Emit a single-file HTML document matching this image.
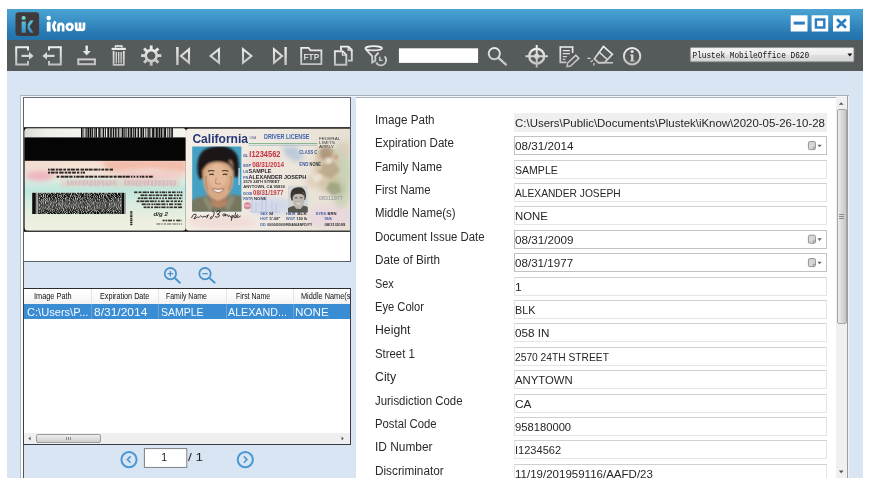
<!DOCTYPE html>
<html>
<head>
<meta charset="utf-8">
<title>iKnow</title>
<style>
html,body{margin:0;padding:0;background:#fff;}
body{width:869px;height:490px;position:relative;overflow:hidden;font-family:"Liberation Sans",sans-serif;}
.abs{position:absolute;}
.t{position:absolute;white-space:nowrap;}
#win{position:absolute;left:7px;top:9px;width:856px;height:469px;background:#dae5f3;overflow:hidden;filter:blur(0.4px);}
#title{position:absolute;left:0;top:0;width:856px;height:31px;background:linear-gradient(#4aa3d1 0%,#3c92c7 35%,#2b7db6 70%,#2272ab 100%);}
#tool{position:absolute;left:0;top:31px;width:856px;height:30.5px;background:#555a5b;}
.wb{position:absolute;top:6px;width:17px;height:16px;background:#fff;}
#imgpanel{position:absolute;left:16px;top:88px;width:326px;height:163px;background:#fff;border:1px solid #5d626b;border-top-color:#666b74;}
#list{position:absolute;left:16px;top:279px;width:326px;height:155px;background:#fff;border:1px solid #3a3e44;border-top:1.5px solid #2a2d32;overflow:hidden;}
#form{position:absolute;left:348.5px;top:88px;width:491px;height:381px;background:#fff;overflow:hidden;border-top:1px solid #aab0ba;}
.tb{position:absolute;left:506.5px;width:311px;height:17.4px;border:1px solid #e5e5e5;border-top-color:#d0d0d0;background:#fff;}
.tb.ro{background:#efefef;border-color:#efefef;}
.tb.dt{border-color:#c2c2c2;}
svg{position:absolute;overflow:visible;}
</style>
</head>
<body>
<div id="win">
<div id="title"></div>
<div id="tool"></div>

<div class="abs" style="left:13px;top:86px;width:829px;height:1px;background:#a9b0ba;"></div>
<div class="abs" style="left:14px;top:87px;width:826px;height:1px;background:#f3f6fa;"></div>
<div class="abs" style="left:13px;top:86px;width:1px;height:383px;background:#b3bac4;"></div>
<div class="abs" style="left:14px;top:87px;width:2px;height:382px;background:#fbfcfe;"></div>
<div class="abs" style="left:16px;top:88px;width:1px;height:381px;background:#4f545c;"></div>
<div class="abs" style="left:840px;top:87px;width:2px;height:382px;background:#eef2f8;"></div>
<div id="imgpanel"></div>
<div id="list"></div>
<div id="form"></div>
<div class="tb ro" style="top:104px;"></div>
<div class="t" id="l0" style="left:367.70px;top:104.84px;font-size:12px;line-height:12px;color:#2a2a2a;font-weight:normal;font-family:'Liberation Sans',sans-serif;transform-origin:0 0;transform:scaleX(0.9711);">Image Path</div>
<div class="t" id="v0" style="left:508.20px;top:108.73px;font-size:11.3px;line-height:11.3px;color:#262626;font-weight:normal;font-family:'Liberation Sans',sans-serif;transform-origin:0 0;transform:scaleX(1.0137);">C:\Users\Public\Documents\Plustek\iKnow\2020-05-26-10-28</div>
<div class="tb dt" style="top:127px;"></div>
<div class="t" id="l1" style="left:367.70px;top:128.24px;font-size:12px;line-height:12px;color:#2a2a2a;font-weight:normal;font-family:'Liberation Sans',sans-serif;transform-origin:0 0;transform:scaleX(0.9629);">Expiration Date</div>
<div class="t" id="v1" style="left:508.20px;top:132.14px;font-size:11.3px;line-height:11.3px;color:#262626;font-weight:normal;font-family:'Liberation Sans',sans-serif;transform-origin:0 0;transform:scaleX(1.0345);">08/31/2014</div>
<div class="tb " style="top:151px;"></div>
<div class="t" id="l2" style="left:367.70px;top:151.64px;font-size:12px;line-height:12px;color:#2a2a2a;font-weight:normal;font-family:'Liberation Sans',sans-serif;transform-origin:0 0;transform:scaleX(0.9492);">Family Name</div>
<div class="t" id="v2" style="left:508.20px;top:155.55px;font-size:11.3px;line-height:11.3px;color:#262626;font-weight:normal;font-family:'Liberation Sans',sans-serif;transform-origin:0 0;transform:scaleX(0.9336);">SAMPLE</div>
<div class="tb " style="top:174px;"></div>
<div class="t" id="l3" style="left:367.70px;top:175.04px;font-size:12px;line-height:12px;color:#2a2a2a;font-weight:normal;font-family:'Liberation Sans',sans-serif;transform-origin:0 0;transform:scaleX(0.9459);">First Name</div>
<div class="t" id="v3" style="left:508.20px;top:178.96px;font-size:11.3px;line-height:11.3px;color:#262626;font-weight:normal;font-family:'Liberation Sans',sans-serif;transform-origin:0 0;transform:scaleX(0.9051);">ALEXANDER JOSEPH</div>
<div class="tb " style="top:197px;"></div>
<div class="t" id="l4" style="left:367.70px;top:198.44px;font-size:12px;line-height:12px;color:#2a2a2a;font-weight:normal;font-family:'Liberation Sans',sans-serif;transform-origin:0 0;transform:scaleX(0.9517);">Middle Name(s)</div>
<div class="t" id="v4" style="left:508.20px;top:202.37px;font-size:11.3px;line-height:11.3px;color:#262626;font-weight:normal;font-family:'Liberation Sans',sans-serif;transform-origin:0 0;transform:scaleX(1.0049);">NONE</div>
<div class="tb dt" style="top:221px;"></div>
<div class="t" id="l5" style="left:367.70px;top:221.84px;font-size:12px;line-height:12px;color:#2a2a2a;font-weight:normal;font-family:'Liberation Sans',sans-serif;transform-origin:0 0;transform:scaleX(0.9498);">Document Issue Date</div>
<div class="t" id="v5" style="left:508.20px;top:225.78px;font-size:11.3px;line-height:11.3px;color:#262626;font-weight:normal;font-family:'Liberation Sans',sans-serif;transform-origin:0 0;transform:scaleX(1.0345);">08/31/2009</div>
<div class="tb dt" style="top:244px;"></div>
<div class="t" id="l6" style="left:367.70px;top:245.24px;font-size:12px;line-height:12px;color:#2a2a2a;font-weight:normal;font-family:'Liberation Sans',sans-serif;transform-origin:0 0;transform:scaleX(0.9760);">Date of Birth</div>
<div class="t" id="v6" style="left:508.20px;top:249.19px;font-size:11.3px;line-height:11.3px;color:#262626;font-weight:normal;font-family:'Liberation Sans',sans-serif;transform-origin:0 0;transform:scaleX(1.0275);">08/31/1977</div>
<div class="tb " style="top:268px;"></div>
<div class="t" id="l7" style="left:367.70px;top:268.64px;font-size:12px;line-height:12px;color:#2a2a2a;font-weight:normal;font-family:'Liberation Sans',sans-serif;transform-origin:0 0;transform:scaleX(0.9039);">Sex</div>
<div class="t" id="v7" style="left:508.20px;top:272.60px;font-size:11.3px;line-height:11.3px;color:#262626;font-weight:normal;font-family:'Liberation Sans',sans-serif;transform-origin:0 0;transform:scaleX(1.0640);">1</div>
<div class="tb " style="top:291px;"></div>
<div class="t" id="l8" style="left:367.70px;top:292.04px;font-size:12px;line-height:12px;color:#2a2a2a;font-weight:normal;font-family:'Liberation Sans',sans-serif;transform-origin:0 0;transform:scaleX(0.9300);">Eye Color</div>
<div class="t" id="v8" style="left:508.20px;top:296.01px;font-size:11.3px;line-height:11.3px;color:#262626;font-weight:normal;font-family:'Liberation Sans',sans-serif;transform-origin:0 0;transform:scaleX(0.9551);">BLK</div>
<div class="tb " style="top:314px;"></div>
<div class="t" id="l9" style="left:367.70px;top:315.44px;font-size:12px;line-height:12px;color:#2a2a2a;font-weight:normal;font-family:'Liberation Sans',sans-serif;transform-origin:0 0;transform:scaleX(1.0234);">Height</div>
<div class="t" id="v9" style="left:508.20px;top:319.42px;font-size:11.3px;line-height:11.3px;color:#262626;font-weight:normal;font-family:'Liberation Sans',sans-serif;transform-origin:0 0;transform:scaleX(1.0361);">058 IN</div>
<div class="tb " style="top:338px;"></div>
<div class="t" id="l10" style="left:367.70px;top:338.84px;font-size:12px;line-height:12px;color:#2a2a2a;font-weight:normal;font-family:'Liberation Sans',sans-serif;transform-origin:0 0;transform:scaleX(0.9469);">Street 1</div>
<div class="t" id="v10" style="left:508.20px;top:342.83px;font-size:11.3px;line-height:11.3px;color:#262626;font-weight:normal;font-family:'Liberation Sans',sans-serif;transform-origin:0 0;transform:scaleX(0.9063);">2570 24TH STREET</div>
<div class="tb " style="top:361px;"></div>
<div class="t" id="l11" style="left:367.70px;top:362.24px;font-size:12px;line-height:12px;color:#2a2a2a;font-weight:normal;font-family:'Liberation Sans',sans-serif;transform-origin:0 0;transform:scaleX(1.0255);">City</div>
<div class="t" id="v11" style="left:508.20px;top:366.24px;font-size:11.3px;line-height:11.3px;color:#262626;font-weight:normal;font-family:'Liberation Sans',sans-serif;transform-origin:0 0;transform:scaleX(1.0027);">ANYTOWN</div>
<div class="tb " style="top:385px;"></div>
<div class="t" id="l12" style="left:367.70px;top:385.64px;font-size:12px;line-height:12px;color:#2a2a2a;font-weight:normal;font-family:'Liberation Sans',sans-serif;transform-origin:0 0;transform:scaleX(0.9506);">Jurisdiction Code</div>
<div class="t" id="v12" style="left:508.20px;top:389.65px;font-size:11.3px;line-height:11.3px;color:#262626;font-weight:normal;font-family:'Liberation Sans',sans-serif;transform-origin:0 0;transform:scaleX(1.0507);">CA</div>
<div class="tb " style="top:408px;"></div>
<div class="t" id="l13" style="left:367.70px;top:409.04px;font-size:12px;line-height:12px;color:#2a2a2a;font-weight:normal;font-family:'Liberation Sans',sans-serif;transform-origin:0 0;transform:scaleX(0.9423);">Postal Code</div>
<div class="t" id="v13" style="left:508.20px;top:413.06px;font-size:11.3px;line-height:11.3px;color:#262626;font-weight:normal;font-family:'Liberation Sans',sans-serif;transform-origin:0 0;transform:scaleX(0.9921);">958180000</div>
<div class="tb " style="top:431px;"></div>
<div class="t" id="l14" style="left:367.70px;top:432.44px;font-size:12px;line-height:12px;color:#2a2a2a;font-weight:normal;font-family:'Liberation Sans',sans-serif;transform-origin:0 0;transform:scaleX(0.9911);">ID Number</div>
<div class="t" id="v14" style="left:508.20px;top:436.47px;font-size:11.3px;line-height:11.3px;color:#262626;font-weight:normal;font-family:'Liberation Sans',sans-serif;transform-origin:0 0;transform:scaleX(0.9782);">I1234562</div>
<div class="tb " style="top:455px;"></div>
<div class="t" id="l15" style="left:367.70px;top:455.84px;font-size:12px;line-height:12px;color:#2a2a2a;font-weight:normal;font-family:'Liberation Sans',sans-serif;transform-origin:0 0;transform:scaleX(0.9812);">Discriminator</div>
<div class="t" id="v15" style="left:508.20px;top:459.88px;font-size:11.3px;line-height:11.3px;color:#262626;font-weight:normal;font-family:'Liberation Sans',sans-serif;transform-origin:0 0;transform:scaleX(1.0196);">11/19/201959116/AAFD/23</div>
<svg style="left:-7px;top:-9px" width="869" height="490" viewBox="0 0 869 490">
<defs><linearGradient id="ig" x1="0" y1="45" x2="0" y2="66" gradientUnits="userSpaceOnUse"><stop offset="0" stop-color="#f4f4f4"/><stop offset="1" stop-color="#bdbdbd"/></linearGradient><linearGradient id="lg" x1="0" y1="16" x2="0" y2="34" gradientUnits="userSpaceOnUse"><stop offset="0" stop-color="#7fe0c0"/><stop offset="0.5" stop-color="#4ab0d8"/><stop offset="1" stop-color="#2f86d0"/></linearGradient></defs>
<rect x="15.5" y="12.2" width="23.6" height="23.8" rx="3.2" fill="#3f3b3c"/>
<circle cx="23.6" cy="18" r="2.1" fill="url(#lg)"/>
<path d="M21.6 21.5 h4.2 v11.3 h-4.2z" fill="url(#lg)"/>
<path d="M33.6 20.6 L29.6 26.6 L33.4 32.8 L30.2 32.8 L27.6 28.6 L27.6 24.4 L30.2 20.6z" fill="url(#lg)"/>
<g fill="#fff"><circle cx="48.7" cy="18" r="2.35"/><path d="M46.8 23.2 q0 -1.8 1.9 -1.8 q1.9 0 1.9 1.8 V31.4 H46.8z"/><g fill="none" stroke="#fff" stroke-width="2.7"><path d="M55.6 21.6 Q51.2 26.4 55.6 31.3" stroke-width="2.9"/><path d="M58.55 31.4 V26.2 a2.3 2.3 0 0 1 4.6 0 V31.4"/><ellipse cx="69.65" cy="26.9" rx="2.85" ry="3.1"/><path d="M76.15 22.4 V28 a1.95 1.95 0 0 0 3.9 0 V22.4 M80.05 28 a1.95 1.95 0 0 0 3.9 0 V22.4"/></g></g>
<rect x="790.7" y="15.3" width="16.8" height="16.2" fill="#fff"/><rect x="793.6" y="21.6" width="11.2" height="3" fill="#2b7dc0"/>
<rect x="811.6" y="15.3" width="16.6" height="16.2" fill="#fff"/><rect x="815.9" y="19.5" width="8.4" height="8" fill="none" stroke="#2b7dc0" stroke-width="2.4"/>
<rect x="833" y="15.3" width="16.8" height="16.2" fill="#fff"/><path d="M837 19.2 L846 27.8 M846 19.2 L837 27.8" stroke="#2b7dc0" stroke-width="2.6" fill="none"/>
<g fill="none" stroke="url(#ig)" stroke-width="2" stroke-linejoin="miter">
<path d="M28 50.5 V47.2 H16.2 V64.5 H28 V61"/>
<path d="M21.5 55.9 H31.5" stroke-width="2.2"/><path d="M29 52 L33.6 55.9 L29 59.8z" fill="url(#ig)" stroke="none"/>
<path d="M49 50.5 V47.2 H60.8 V64.5 H49 V61"/>
<path d="M44.5 55.9 H54.5" stroke-width="2.2"/><path d="M47 52 L42.4 55.9 L47 59.8z" fill="url(#ig)" stroke="none"/>
<rect x="78.3" y="59.4" width="16.6" height="4.8"/>
<path d="M86.7 45.6 V52" stroke-width="2.4"/><path d="M82.6 51 H90.8 L86.7 55.6z" fill="url(#ig)" stroke="none"/>
<path d="M111.6 48.9 H125.8" stroke-width="2.2"/><path d="M115.6 47.6 V46 H121.8 V47.6" stroke-width="1.6"/>
<path d="M113.6 51 V64.8 H123.8 V51" stroke-width="1.8"/><path d="M116.3 52 V63.4 M118.7 52 V63.4 M121.1 52 V63.4" stroke-width="1.3"/>
</g>
<g fill="none"><path d="M157.20 55.60 L161.30 55.60" stroke="url(#ig)" stroke-width="2.8"/><path d="M155.44 59.84 L158.34 62.74" stroke="url(#ig)" stroke-width="2.8"/><path d="M151.20 61.60 L151.20 65.70" stroke="url(#ig)" stroke-width="2.8"/><path d="M146.96 59.84 L144.06 62.74" stroke="url(#ig)" stroke-width="2.8"/><path d="M145.20 55.60 L141.10 55.60" stroke="url(#ig)" stroke-width="2.8"/><path d="M146.96 51.36 L144.06 48.46" stroke="url(#ig)" stroke-width="2.8"/><path d="M151.20 49.60 L151.20 45.50" stroke="url(#ig)" stroke-width="2.8"/><path d="M155.44 51.36 L158.34 48.46" stroke="url(#ig)" stroke-width="2.8"/><circle cx="151.2" cy="55.6" r="5.5" stroke="url(#ig)" stroke-width="2.6"/></g>
<g fill="none" stroke="url(#ig)" stroke-width="2.1" stroke-linejoin="miter">
<path d="M177.4 47 V65" stroke-width="2.4"/><path d="M189 49.2 V62.8 L181 56z"/>
<path d="M219 49.2 V62.8 L210.6 56z"/>
<path d="M243 49.2 V62.8 L251.4 56z"/>
<path d="M285.6 47 V65" stroke-width="2.4"/><path d="M274 49.2 V62.8 L282 56z"/>
<path d="M301.2 64.2 V47.8 H308.6 L310.4 50.3 H321.4 V64.2z" stroke-width="1.8"/>
</g>
<text x="303.5" y="59.5" font-family="Liberation Sans" font-weight="bold" font-size="8.2" fill="url(#ig)" textLength="15.7" lengthAdjust="spacingAndGlyphs">FTP</text>
<g fill="none" stroke="url(#ig)" stroke-width="1.9" stroke-linejoin="miter">
<path d="M341 50 V46.6 H348.4 L351.8 50 V60.6 H348"/><path d="M348.2 46.8 V50.2 H351.6" stroke-width="1.2"/>
<path d="M334.9 51.2 H342.6 L346.3 54.9 V64.7 H334.9z"/><path d="M342.4 51.4 V55.1 H346.1" stroke-width="1.2"/>
<ellipse cx="373.7" cy="48.3" rx="8.3" ry="2.1" stroke-width="1.8"/><path d="M365.6 49.2 L372.2 56.2 V62.6 L375.3 60.6 V56.2 L378.6 52.6" stroke-width="1.8"/>
<path d="M384.6 56.3 A5.3 5.3 0 1 1 376.6 63.2" stroke-width="1.8"/><path d="M379.8 56.8 V60.4 H382.6" stroke-width="1.4"/><path d="M375.2 62.2 l1.4 2.6 l2 -2z" fill="url(#ig)" stroke="none"/>
</g>
<rect x="398.9" y="48.3" width="79.2" height="14.6" fill="#fff"/>
<g fill="none" stroke="url(#ig)" stroke-width="1.9">
<circle cx="494.3" cy="53.6" r="5.6"/><path d="M498.4 57.8 L506 64.6" stroke-width="2.3" stroke-linecap="round"/>
<circle cx="536.7" cy="56.2" r="7.4" stroke-width="2.4"/><path d="M536.7 45 V67.4 M525.5 56.2 H547.9" stroke-width="1.9"/><circle cx="536.7" cy="56.2" r="2.6" fill="url(#ig)" stroke="none"/>
<path d="M572.6 53 V47 H560.3 V62.4 H566.4" stroke-width="1.7"/><path d="M562.8 50.6 H570 M562.8 53.6 H570 M562.8 56.6 H567 M562.8 59.4 H565.4" stroke-width="1.2"/>
<path d="M575.8 55.2 L578.8 58.2 L570.6 66 L567 66.6 L567.6 63z" stroke-width="1.5"/>
<path d="M603.4 46.4 L612.4 54.4 L604.6 62.6 H598.4 L594.4 58.8z" stroke-width="1.7"/><path d="M598.8 51.8 L607.4 59.6" stroke-width="1.5"/><path d="M598 62.8 H613" stroke-width="1.6"/>
<path d="M587.4 58.4 H590.6 M590.6 62 L592.8 60.4 M593.6 65.6 L594.4 63" stroke-width="1.3"/>
<circle cx="632.1" cy="56.2" r="8.2" stroke-width="2"/>
</g>
<circle cx="632.1" cy="51.6" r="1.5" fill="url(#ig)"/><path d="M630 54.4 H633.4 V60.4 H634.6 V61.6 H629.8 V60.4 H631 V55.6 H630z" fill="url(#ig)"/>
<defs><linearGradient id="dd" x1="0" y1="0" x2="0" y2="1"><stop offset="0" stop-color="#f6f6f6"/><stop offset="0.5" stop-color="#ececec"/><stop offset="0.5" stop-color="#dfdfdf"/><stop offset="1" stop-color="#d4d4d4"/></linearGradient></defs>
<rect x="690.3" y="47.6" width="163.6" height="14.2" rx="1" fill="url(#dd)" stroke="#8e8e8e" stroke-width="0.8"/>
<path d="M847.4 53.6 H852.4 L849.9 56.4z" fill="#111"/>
<text x="692.4" y="57.5" font-family="Liberation Mono" font-size="8.3" fill="#111" textLength="116.8" lengthAdjust="spacingAndGlyphs">Plustek MobileOffice D620</text>
<g fill="none" stroke="#4a92cb" stroke-width="1.8"><circle cx="170.4" cy="273.7" r="5.7"/><path d="M167.6 273.7 H173.2 M170.4 270.9 V276.5" stroke-width="1.3"/><path d="M174.6 277.8 L180.4 283.3" stroke-width="1.9"/><circle cx="205" cy="273.7" r="5.7"/><path d="M202.2 273.7 H207.8" stroke-width="1.3"/><path d="M209.2 277.8 L215.2 283.3" stroke-width="1.9"/></g>
<g fill="none" stroke="#4a98d2" stroke-width="2"><circle cx="129" cy="459.6" r="7.6"/><path d="M130.6 456.4 L127.4 459.6 L130.6 462.8" stroke-width="1.6"/><circle cx="245.3" cy="459.6" r="7.6"/><path d="M243.8 456.4 L247 459.6 L243.8 462.8" stroke-width="1.6"/></g>
<rect x="144.4" y="448.6" width="42.4" height="18.8" fill="#fff" stroke="#7d8187" stroke-width="1"/>
</svg>
<div class="t" id="pg1" style="left:154.30px;top:443.01px;font-size:10.5px;line-height:10.5px;color:#222;font-weight:normal;font-family:'Liberation Sans',sans-serif;transform-origin:0 0;transform:scaleX(1.0000);">1</div>
<div class="t" id="pg2" style="left:181.40px;top:442.99px;font-size:11px;line-height:11px;color:#222;font-weight:normal;font-family:'Liberation Sans',sans-serif;transform-origin:0 0;transform:scaleX(1.2424);">/ 1</div>
<div class="abs" style="left:17px;top:280.5px;width:326px;height:14.4px;background:linear-gradient(#ffffff 0%,#fafafa 50%,#f0f1f2 100%);border-bottom:1px solid #dcdee0;"></div>
<div class="abs" style="left:84.3px;top:280px;width:1px;height:14.4px;background:#e2e4e6;"></div>
<div class="abs" style="left:151.4px;top:280px;width:1px;height:14.4px;background:#e2e4e6;"></div>
<div class="abs" style="left:218.5px;top:280px;width:1px;height:14.4px;background:#e2e4e6;"></div>
<div class="abs" style="left:285.6px;top:280px;width:1px;height:14.4px;background:#e2e4e6;"></div>
<div class="abs" style="left:17px;top:294.6px;width:326px;height:15.8px;background:#3a8dd3;"></div>
<div class="abs" style="left:84.3px;top:294.6px;width:1px;height:15.8px;background:#62a5dd;"></div>
<div class="abs" style="left:151.4px;top:294.6px;width:1px;height:15.8px;background:#62a5dd;"></div>
<div class="abs" style="left:218.5px;top:294.6px;width:1px;height:15.8px;background:#62a5dd;"></div>
<div class="abs" style="left:285.6px;top:294.6px;width:1px;height:15.8px;background:#62a5dd;"></div>
<div class="abs" style="left:17px;top:424.4px;width:326px;height:10.6px;background:#efefef;"></div>
<div class="abs" style="left:29.3px;top:425px;width:65px;height:9px;border-radius:2px;background:linear-gradient(#eeeeee,#cecece);border:1px solid #9c9c9c;box-sizing:border-box;"></div>
<div class="abs" style="left:58.5px;top:428px;width:5px;height:3px;background:repeating-linear-gradient(90deg,#8a8a8a 0 1px,transparent 1px 2px);"></div>
<svg style="left:0;top:0" width="856" height="469"><path d="M23.6 429.6 L21.4 427.6 L23.6 425.6z M334.6 429.6 L336.8 427.6 L334.6 425.6z" transform="translate(0,2)" fill="#555"/></svg>
<div class="t" id="h0" style="left:26.50px;top:283.32px;font-size:8.6px;line-height:8.6px;color:#101010;font-weight:normal;font-family:'Liberation Sans',sans-serif;transform-origin:0 0;transform:scaleX(0.8555);">Image Path</div>
<div class="t" id="h1" style="left:93.40px;top:283.32px;font-size:8.6px;line-height:8.6px;color:#101010;font-weight:normal;font-family:'Liberation Sans',sans-serif;transform-origin:0 0;transform:scaleX(0.8406);">Expiration Date</div>
<div class="t" id="h2" style="left:158.60px;top:283.32px;font-size:8.6px;line-height:8.6px;color:#101010;font-weight:normal;font-family:'Liberation Sans',sans-serif;transform-origin:0 0;transform:scaleX(0.8079);">Family Name</div>
<div class="t" id="h3" style="left:228.90px;top:283.32px;font-size:8.6px;line-height:8.6px;color:#101010;font-weight:normal;font-family:'Liberation Sans',sans-serif;transform-origin:0 0;transform:scaleX(0.8113);">First Name</div>
<div class="t" id="h4" style="left:294.20px;top:283.32px;font-size:8.6px;line-height:8.6px;color:#101010;font-weight:normal;font-family:'Liberation Sans',sans-serif;transform-origin:0 0;transform:scaleX(0.8547);">Middle Name(s</div>
<div class="t" id="c0" style="left:19.90px;top:297.28px;font-size:11.6px;line-height:11.6px;color:#f4f9ff;font-weight:normal;font-family:'Liberation Sans',sans-serif;transform-origin:0 0;transform:scaleX(0.9561);">C:\Users\P...</div>
<div class="t" id="c1" style="left:86.50px;top:297.28px;font-size:11.6px;line-height:11.6px;color:#f4f9ff;font-weight:normal;font-family:'Liberation Sans',sans-serif;transform-origin:0 0;transform:scaleX(1.0353);">8/31/2014</div>
<div class="t" id="c2" style="left:153.80px;top:297.28px;font-size:11.6px;line-height:11.6px;color:#f4f9ff;font-weight:normal;font-family:'Liberation Sans',sans-serif;transform-origin:0 0;transform:scaleX(0.9055);">SAMPLE</div>
<div class="t" id="c3" style="left:220.70px;top:297.28px;font-size:11.6px;line-height:11.6px;color:#f4f9ff;font-weight:normal;font-family:'Liberation Sans',sans-serif;transform-origin:0 0;transform:scaleX(0.9232);">ALEXAND...</div>
<div class="t" id="c4" style="left:287.50px;top:297.28px;font-size:11.6px;line-height:11.6px;color:#f4f9ff;font-weight:normal;font-family:'Liberation Sans',sans-serif;transform-origin:0 0;transform:scaleX(1.0119);">NONE</div>
<div class="abs" style="left:344px;top:279px;width:4.5px;height:32px;background:#dae5f3;"></div><div class="abs" style="left:343px;top:279px;width:1px;height:156px;background:#3a3e44;"></div>
<div class="abs" style="left:829px;top:88px;width:11px;height:381px;background:#f0f0f0;"></div>
<div class="abs" style="left:829.5px;top:100.4px;width:10px;height:215px;border-radius:2px;background:linear-gradient(90deg,#ececec,#dadada 45%,#c6c6c6);border:1px solid #a6a6a6;box-sizing:border-box;"></div>
<div class="abs" style="left:832px;top:204.6px;width:5px;height:5px;background:repeating-linear-gradient(#8a8a8a 0 1px,transparent 1px 2px);"></div>
<svg style="left:0;top:0" width="856" height="469"><path d="M831.8 95.8 L834.2 93.2 L836.6 95.8z M831.8 461.6 L834.2 464.2 L836.6 461.6z" fill="#555"/></svg>
<div class="abs" style="left:840px;top:87px;width:1px;height:382px;background:#9a9fa6;"></div>
<svg style="left:0;top:0" width="856" height="469"><rect x="801.4" y="132.6" width="7" height="8" rx="1.2" fill="#d6d6d6" stroke="#949494" stroke-width="1"/><path d="M806.4 140.3 v-2 h2" fill="none" stroke="#8a8a8a" stroke-width="0.8"/><path d="M810.4 135.7 h4.4 l-2.2 2.6z" fill="#666"/></svg>
<svg style="left:0;top:0" width="856" height="469"><rect x="801.4" y="226.2" width="7" height="8" rx="1.2" fill="#d6d6d6" stroke="#949494" stroke-width="1"/><path d="M806.4 233.9 v-2 h2" fill="none" stroke="#8a8a8a" stroke-width="0.8"/><path d="M810.4 229.3 h4.4 l-2.2 2.6z" fill="#666"/></svg>
<svg style="left:0;top:0" width="856" height="469"><rect x="801.4" y="249.6" width="7" height="8" rx="1.2" fill="#d6d6d6" stroke="#949494" stroke-width="1"/><path d="M806.4 257.3 v-2 h2" fill="none" stroke="#8a8a8a" stroke-width="0.8"/><path d="M810.4 252.7 h4.4 l-2.2 2.6z" fill="#666"/></svg>
<svg style="left:17px;top:89px;overflow:hidden" width="326" height="163" viewBox="24 98 326 163">
<defs>
<filter id="b1" x="-20%" y="-20%" width="140%" height="140%"><feGaussianBlur stdDeviation="1.2"/></filter>
<filter id="b2" x="-20%" y="-20%" width="140%" height="140%"><feGaussianBlur stdDeviation="2.4"/></filter>
<filter id="b07" x="-10%" y="-10%" width="120%" height="120%"><feGaussianBlur stdDeviation="0.6"/></filter>
<filter id="b05" x="-10%" y="-10%" width="120%" height="120%"><feGaussianBlur stdDeviation="0.45"/></filter>
<filter id="b03" x="-10%" y="-10%" width="120%" height="120%"><feGaussianBlur stdDeviation="0.3"/></filter>
<linearGradient id="bk" x1="0" y1="160" x2="0" y2="231" gradientUnits="userSpaceOnUse">
<stop offset="0" stop-color="#f3ddd2"/><stop offset="0.2" stop-color="#f1e0d6"/><stop offset="0.30" stop-color="#d9ece2"/><stop offset="0.42" stop-color="#bfe6dd"/><stop offset="0.62" stop-color="#d9ece0"/><stop offset="0.85" stop-color="#ecefde"/><stop offset="1" stop-color="#eef0e2"/></linearGradient>
<linearGradient id="tp" x1="24" y1="0" x2="82" y2="0" gradientUnits="userSpaceOnUse"><stop offset="0" stop-color="#dcdcd6"/><stop offset="0.4" stop-color="#efefe9"/><stop offset="1" stop-color="#f5f5ef"/></linearGradient>
<linearGradient id="fr" x1="186" y1="0" x2="350" y2="0" gradientUnits="userSpaceOnUse"><stop offset="0" stop-color="#f4efe6"/><stop offset="0.45" stop-color="#efe9e2"/><stop offset="1" stop-color="#e6dfd2"/></linearGradient>
<clipPath id="cpb"><rect x="24.6" y="128" width="161.2" height="103" rx="3.5"/></clipPath>
<clipPath id="cpf"><rect x="186" y="128.4" width="170" height="102.6" rx="3"/></clipPath>
<clipPath id="cpp"><rect x="192.2" y="146.4" width="49.2" height="65"/></clipPath>
<clipPath id="cpg"><rect x="288" y="185.6" width="19.8" height="27"/></clipPath>
</defs>
<rect x="24" y="127.4" width="326" height="104.2" fill="#0c0c0c"/>
<g clip-path="url(#cpb)">
<rect x="24" y="127" width="163" height="106" fill="url(#bk)"/>
<rect x="24" y="127" width="163" height="11" fill="url(#tp)"/>
<g filter="url(#b2)" opacity="0.9"><ellipse cx="40" cy="176" rx="14" ry="5" fill="#eeb0bc"/><path d="M100 160 L186 160 L186 172 L150 168 L110 172z" fill="#f2b7a4"/><ellipse cx="150" cy="176" rx="34" ry="4" fill="#f0c6c4"/><ellipse cx="80" cy="166" rx="24" ry="4" fill="#f6e2d4"/></g>
<g opacity="0.75">
<rect x="67.0" y="180.2" width="0.7" height="5.1" fill="#c79bbf"/>
<rect x="68.3" y="180.2" width="0.7" height="4.8" fill="#c79bbf"/>
<rect x="69.7" y="180.2" width="0.7" height="5.8" fill="#c79bbf"/>
<rect x="71.0" y="180.2" width="0.7" height="4.6" fill="#c79bbf"/>
<rect x="72.4" y="180.2" width="0.7" height="5.6" fill="#c79bbf"/>
<rect x="73.7" y="180.2" width="0.7" height="5.2" fill="#c79bbf"/>
<rect x="75.1" y="180.2" width="0.7" height="4.6" fill="#c79bbf"/>
<rect x="76.4" y="180.2" width="0.7" height="5.5" fill="#c79bbf"/>
<rect x="77.8" y="180.2" width="0.7" height="4.6" fill="#c79bbf"/>
<rect x="79.1" y="180.2" width="0.7" height="5.4" fill="#c79bbf"/>
<rect x="80.5" y="180.2" width="0.7" height="4.6" fill="#c79bbf"/>
<rect x="81.8" y="180.2" width="0.7" height="4.7" fill="#c79bbf"/>
<rect x="83.2" y="180.2" width="0.7" height="5.3" fill="#c79bbf"/>
<rect x="84.5" y="180.2" width="0.7" height="6.2" fill="#c79bbf"/>
<rect x="85.9" y="180.2" width="0.7" height="4.7" fill="#c79bbf"/>
<rect x="87.2" y="180.2" width="0.7" height="4.9" fill="#c79bbf"/>
<rect x="88.6" y="180.2" width="0.7" height="5.8" fill="#c79bbf"/>
<rect x="89.9" y="180.2" width="0.7" height="6.4" fill="#c79bbf"/>
<rect x="91.3" y="180.2" width="0.7" height="5.7" fill="#c79bbf"/>
<rect x="92.6" y="180.2" width="0.7" height="5.3" fill="#c79bbf"/>
<rect x="94.0" y="180.2" width="0.7" height="6.5" fill="#c79bbf"/>
<rect x="95.3" y="180.2" width="0.7" height="4.6" fill="#c79bbf"/>
<rect x="96.7" y="180.2" width="0.7" height="6.2" fill="#c79bbf"/>
<rect x="98.0" y="180.2" width="0.7" height="5.1" fill="#c79bbf"/>
<rect x="99.4" y="180.2" width="0.7" height="4.8" fill="#c79bbf"/>
<rect x="100.7" y="180.2" width="0.7" height="4.7" fill="#c79bbf"/>
<rect x="102.1" y="180.2" width="0.7" height="5.1" fill="#c79bbf"/>
<rect x="103.4" y="180.2" width="0.7" height="6.1" fill="#c79bbf"/>
<rect x="104.8" y="180.2" width="0.7" height="4.9" fill="#c79bbf"/>
<rect x="106.1" y="180.2" width="0.7" height="5.7" fill="#c79bbf"/>
<rect x="107.5" y="180.2" width="0.7" height="5.8" fill="#c79bbf"/>
<rect x="108.8" y="180.2" width="0.7" height="5.2" fill="#c79bbf"/>
<rect x="110.2" y="180.2" width="0.7" height="5.6" fill="#c79bbf"/>
<rect x="111.5" y="180.2" width="0.7" height="4.6" fill="#c79bbf"/>
<rect x="112.9" y="180.2" width="0.7" height="4.6" fill="#c79bbf"/>
<rect x="114.2" y="180.2" width="0.7" height="4.9" fill="#c79bbf"/>
<rect x="115.6" y="180.2" width="0.7" height="5.9" fill="#c79bbf"/>
<rect x="124.0" y="180.2" width="0.7" height="5.4" fill="#c79bbf"/>
<rect x="125.3" y="180.2" width="0.7" height="5.1" fill="#c79bbf"/>
<rect x="126.7" y="180.2" width="0.7" height="5.7" fill="#c79bbf"/>
<rect x="128.0" y="180.2" width="0.7" height="5.4" fill="#c79bbf"/>
<rect x="129.4" y="180.2" width="0.7" height="5.1" fill="#c79bbf"/>
<rect x="130.7" y="180.2" width="0.7" height="6.1" fill="#c79bbf"/>
<rect x="132.1" y="180.2" width="0.7" height="5.9" fill="#c79bbf"/>
<rect x="133.4" y="180.2" width="0.7" height="5.0" fill="#c79bbf"/>
<rect x="134.8" y="180.2" width="0.7" height="5.6" fill="#c79bbf"/>
<rect x="136.1" y="180.2" width="0.7" height="5.6" fill="#c79bbf"/>
<rect x="137.5" y="180.2" width="0.7" height="6.3" fill="#c79bbf"/>
<rect x="138.8" y="180.2" width="0.7" height="6.0" fill="#c79bbf"/>
<rect x="140.2" y="180.2" width="0.7" height="5.1" fill="#c79bbf"/>
<rect x="141.5" y="180.2" width="0.7" height="6.5" fill="#c79bbf"/>
<rect x="142.9" y="180.2" width="0.7" height="4.7" fill="#c79bbf"/>
<rect x="144.2" y="180.2" width="0.7" height="5.3" fill="#c79bbf"/>
<rect x="145.6" y="180.2" width="0.7" height="6.0" fill="#c79bbf"/>
<rect x="146.9" y="180.2" width="0.7" height="4.8" fill="#c79bbf"/>
<rect x="148.3" y="180.2" width="0.7" height="5.5" fill="#c79bbf"/>
<rect x="149.6" y="180.2" width="0.7" height="4.6" fill="#c79bbf"/>
<rect x="151.0" y="180.2" width="0.7" height="5.8" fill="#c79bbf"/>
<rect x="152.3" y="180.2" width="0.7" height="6.0" fill="#c79bbf"/>
<rect x="153.7" y="180.2" width="0.7" height="5.6" fill="#c79bbf"/>
<rect x="155.0" y="180.2" width="0.7" height="6.3" fill="#c79bbf"/>
<rect x="156.4" y="180.2" width="0.7" height="5.1" fill="#c79bbf"/>
<rect x="157.7" y="180.2" width="0.7" height="5.9" fill="#c79bbf"/>
<rect x="159.1" y="180.2" width="0.7" height="5.7" fill="#c79bbf"/>
<rect x="160.4" y="180.2" width="0.7" height="5.7" fill="#c79bbf"/>
<rect x="161.8" y="180.2" width="0.7" height="5.4" fill="#c79bbf"/>
<rect x="163.1" y="180.2" width="0.7" height="6.2" fill="#c79bbf"/>
<rect x="164.5" y="180.2" width="0.7" height="6.4" fill="#c79bbf"/>
<rect x="165.8" y="180.2" width="0.7" height="5.4" fill="#c79bbf"/>
<rect x="167.2" y="180.2" width="0.7" height="5.8" fill="#c79bbf"/>
<rect x="168.5" y="180.2" width="0.7" height="4.6" fill="#c79bbf"/>
<rect x="169.9" y="180.2" width="0.7" height="5.9" fill="#c79bbf"/>
<rect x="171.2" y="180.2" width="0.7" height="5.8" fill="#c79bbf"/>
<rect x="172.6" y="180.2" width="0.7" height="6.5" fill="#c79bbf"/>
<rect x="173.9" y="180.2" width="0.7" height="6.1" fill="#c79bbf"/>
<rect x="175.3" y="180.2" width="0.7" height="5.1" fill="#c79bbf"/>
</g>
<rect x="60" y="179.6" width="120" height="7.4" fill="#e9b9a8" opacity="0.35" filter="url(#b1)"/>
<rect x="81.00" y="128" width="1.6" height="9.6" fill="#111"/>
<rect x="83.50" y="128" width="0.7" height="9.6" fill="#111"/>
<rect x="85.50" y="128" width="1.2" height="9.6" fill="#111"/>
<rect x="87.40" y="128" width="2.0" height="9.6" fill="#111"/>
<rect x="89.90" y="128" width="1.6" height="9.6" fill="#111"/>
<rect x="92.00" y="128" width="0.9" height="9.6" fill="#111"/>
<rect x="93.80" y="128" width="0.9" height="9.6" fill="#111"/>
<rect x="95.40" y="128" width="1.6" height="9.6" fill="#111"/>
<rect x="98.30" y="128" width="1.6" height="9.6" fill="#111"/>
<rect x="100.40" y="128" width="0.9" height="9.6" fill="#111"/>
<rect x="102.60" y="128" width="1.6" height="9.6" fill="#111"/>
<rect x="105.10" y="128" width="0.9" height="9.6" fill="#111"/>
<rect x="107.30" y="128" width="2.0" height="9.6" fill="#111"/>
<rect x="110.20" y="128" width="1.6" height="9.6" fill="#111"/>
<rect x="112.70" y="128" width="1.6" height="9.6" fill="#111"/>
<rect x="115.00" y="128" width="0.9" height="9.6" fill="#111"/>
<rect x="116.40" y="128" width="0.9" height="9.6" fill="#111"/>
<rect x="118.00" y="128" width="0.9" height="9.6" fill="#111"/>
<rect x="119.60" y="128" width="0.7" height="9.6" fill="#111"/>
<rect x="121.60" y="128" width="2.0" height="9.6" fill="#111"/>
<rect x="124.30" y="128" width="1.2" height="9.6" fill="#111"/>
<rect x="126.40" y="128" width="0.7" height="9.6" fill="#111"/>
<rect x="127.80" y="128" width="1.6" height="9.6" fill="#111"/>
<rect x="130.30" y="128" width="2.0" height="9.6" fill="#111"/>
<rect x="133.20" y="128" width="0.9" height="9.6" fill="#111"/>
<rect x="134.60" y="128" width="1.6" height="9.6" fill="#111"/>
<rect x="137.50" y="128" width="1.6" height="9.6" fill="#111"/>
<rect x="140.40" y="128" width="1.6" height="9.6" fill="#111"/>
<rect x="142.50" y="128" width="1.6" height="9.6" fill="#111"/>
<rect x="145.40" y="128" width="0.7" height="9.6" fill="#111"/>
<rect x="146.80" y="128" width="0.7" height="9.6" fill="#111"/>
<rect x="148.20" y="128" width="1.6" height="9.6" fill="#111"/>
<rect x="150.50" y="128" width="0.7" height="9.6" fill="#111"/>
<rect x="152.10" y="128" width="2.0" height="9.6" fill="#111"/>
<rect x="154.60" y="128" width="0.7" height="9.6" fill="#111"/>
<rect x="155.80" y="128" width="2.0" height="9.6" fill="#111"/>
<rect x="158.50" y="128" width="2.0" height="9.6" fill="#111"/>
<rect x="161.00" y="128" width="1.2" height="9.6" fill="#111"/>
<rect x="162.70" y="128" width="0.7" height="9.6" fill="#111"/>
<rect x="164.10" y="128" width="2.0" height="9.6" fill="#111"/>
<rect x="167.40" y="128" width="0.9" height="9.6" fill="#111"/>
<rect x="169.20" y="128" width="1.2" height="9.6" fill="#111"/>
<rect x="171.30" y="128" width="1.6" height="9.6" fill="#111"/>
<rect x="24" y="137.4" width="161.6" height="23.4" fill="#050505"/>
<g fill="#2a2320" filter="url(#b03)">
<rect x="48.0" y="168.65" width="1.6" height="1.9" opacity="1.0"/><rect x="50.5" y="168.65" width="4.3" height="1.9" opacity="1.0"/><rect x="55.8" y="168.65" width="2.2" height="1.9" opacity="1.0"/><rect x="58.6" y="168.65" width="3.6" height="1.9" opacity="1.0"/><rect x="63.3" y="168.65" width="2.7" height="1.9" opacity="1.0"/><rect x="67.2" y="168.65" width="2.9" height="1.9" opacity="1.0"/><rect x="70.7" y="168.65" width="4.2" height="1.9" opacity="1.0"/><rect x="75.8" y="168.65" width="3.4" height="1.9" opacity="1.0"/><rect x="80.5" y="168.65" width="3.6" height="1.9" opacity="1.0"/><rect x="84.9" y="168.65" width="3.3" height="1.9" opacity="1.0"/><rect x="88.7" y="168.65" width="3.9" height="1.9" opacity="1.0"/><rect x="93.6" y="168.65" width="4.1" height="1.9" opacity="1.0"/><rect x="98.5" y="168.65" width="1.9" height="1.9" opacity="1.0"/><rect x="101.4" y="168.65" width="2.8" height="1.9" opacity="1.0"/><rect x="105.2" y="168.65" width="3.2" height="1.9" opacity="1.0"/><rect x="109.6" y="168.65" width="3.4" height="1.9" opacity="1.0"/>
<rect x="48.0" y="171.65" width="2.0" height="1.9" opacity="1.0"/><rect x="50.8" y="171.65" width="3.8" height="1.9" opacity="1.0"/><rect x="55.3" y="171.65" width="2.8" height="1.9" opacity="1.0"/><rect x="59.2" y="171.65" width="4.4" height="1.9" opacity="1.0"/><rect x="64.7" y="171.65" width="2.7" height="1.9" opacity="1.0"/><rect x="68.1" y="171.65" width="3.1" height="1.9" opacity="1.0"/><rect x="72.1" y="171.65" width="3.8" height="1.9" opacity="1.0"/><rect x="77.0" y="171.65" width="2.3" height="1.9" opacity="1.0"/><rect x="80.7" y="171.65" width="1.5" height="1.9" opacity="1.0"/><rect x="82.7" y="171.65" width="2.3" height="1.9" opacity="1.0"/>
<rect x="56.6" y="175.70" width="2.7" height="2.0" opacity="1.0"/><rect x="60.7" y="175.70" width="3.2" height="2.0" opacity="1.0"/><rect x="64.4" y="175.70" width="4.1" height="2.0" opacity="1.0"/><rect x="69.3" y="175.70" width="3.3" height="2.0" opacity="1.0"/><rect x="73.8" y="175.70" width="1.6" height="2.0" opacity="1.0"/><rect x="76.2" y="175.70" width="3.5" height="2.0" opacity="1.0"/><rect x="80.3" y="175.70" width="4.0" height="2.0" opacity="1.0"/><rect x="85.3" y="175.70" width="3.2" height="2.0" opacity="1.0"/><rect x="89.1" y="175.70" width="4.2" height="2.0" opacity="1.0"/><rect x="94.4" y="175.70" width="2.7" height="2.0" opacity="1.0"/><rect x="98.3" y="175.70" width="1.5" height="2.0" opacity="1.0"/><rect x="100.4" y="175.70" width="4.4" height="2.0" opacity="1.0"/><rect x="105.3" y="175.70" width="3.1" height="2.0" opacity="1.0"/><rect x="109.3" y="175.70" width="3.3" height="2.0" opacity="1.0"/><rect x="113.6" y="175.70" width="3.1" height="2.0" opacity="1.0"/><rect x="117.7" y="175.70" width="4.2" height="2.0" opacity="1.0"/><rect x="122.5" y="175.70" width="3.0" height="2.0" opacity="1.0"/><rect x="126.0" y="175.70" width="3.8" height="2.0" opacity="1.0"/><rect x="130.9" y="175.70" width="1.5" height="2.0" opacity="1.0"/><rect x="133.6" y="175.70" width="1.6" height="2.0" opacity="1.0"/><rect x="136.6" y="175.70" width="1.8" height="2.0" opacity="1.0"/><rect x="139.7" y="175.70" width="1.3" height="2.0" opacity="1.0"/><rect x="141.6" y="175.70" width="2.8" height="2.0" opacity="1.0"/><rect x="145.6" y="175.70" width="2.2" height="2.0" opacity="1.0"/><rect x="148.8" y="175.70" width="3.9" height="2.0" opacity="1.0"/><rect x="153.3" y="175.70" width="0.1" height="2.0" opacity="1.0"/>
<rect x="134.1" y="191.45" width="3.3" height="1.7" opacity="0.95"/><rect x="138.6" y="191.45" width="2.9" height="1.7" opacity="0.95"/><rect x="142.7" y="191.45" width="4.0" height="1.7" opacity="0.95"/><rect x="147.3" y="191.45" width="1.7" height="1.7" opacity="0.95"/><rect x="150.0" y="191.45" width="4.0" height="1.7" opacity="0.95"/><rect x="155.2" y="191.45" width="3.1" height="1.7" opacity="0.95"/><rect x="159.5" y="191.45" width="1.7" height="1.7" opacity="0.95"/><rect x="161.8" y="191.45" width="3.2" height="1.7" opacity="0.95"/><rect x="165.6" y="191.45" width="1.4" height="1.7" opacity="0.95"/><rect x="168.1" y="191.45" width="2.9" height="1.7" opacity="0.95"/><rect x="171.9" y="191.45" width="3.7" height="1.7" opacity="0.95"/><rect x="176.9" y="191.45" width="1.4" height="1.7" opacity="0.95"/><rect x="178.9" y="191.45" width="1.3" height="1.7" opacity="0.95"/><rect x="180.8" y="191.45" width="1.6" height="1.7" opacity="0.95"/>
<rect x="140.5" y="194.45" width="4.1" height="1.7" opacity="0.95"/><rect x="145.1" y="194.45" width="2.2" height="1.7" opacity="0.95"/><rect x="148.7" y="194.45" width="3.1" height="1.7" opacity="0.95"/><rect x="152.5" y="194.45" width="2.1" height="1.7" opacity="0.95"/><rect x="155.6" y="194.45" width="3.8" height="1.7" opacity="0.95"/><rect x="160.3" y="194.45" width="2.0" height="1.7" opacity="0.95"/><rect x="163.2" y="194.45" width="4.0" height="1.7" opacity="0.95"/><rect x="168.6" y="194.45" width="4.2" height="1.7" opacity="0.95"/><rect x="174.0" y="194.45" width="1.8" height="1.7" opacity="0.95"/><rect x="176.7" y="194.45" width="2.5" height="1.7" opacity="0.95"/><rect x="180.1" y="194.45" width="2.2" height="1.7" opacity="0.95"/>
<rect x="137.8" y="197.45" width="2.6" height="1.7" opacity="0.95"/><rect x="141.1" y="197.45" width="2.2" height="1.7" opacity="0.95"/><rect x="143.8" y="197.45" width="3.7" height="1.7" opacity="0.95"/><rect x="148.8" y="197.45" width="3.3" height="1.7" opacity="0.95"/><rect x="152.9" y="197.45" width="2.0" height="1.7" opacity="0.95"/><rect x="155.6" y="197.45" width="2.7" height="1.7" opacity="0.95"/><rect x="159.4" y="197.45" width="1.5" height="1.7" opacity="0.95"/><rect x="162.2" y="197.45" width="1.7" height="1.7" opacity="0.95"/><rect x="165.0" y="197.45" width="1.9" height="1.7" opacity="0.95"/><rect x="168.0" y="197.45" width="4.4" height="1.7" opacity="0.95"/><rect x="173.3" y="197.45" width="2.5" height="1.7" opacity="0.95"/><rect x="176.6" y="197.45" width="1.5" height="1.7" opacity="0.95"/><rect x="179.0" y="197.45" width="2.3" height="1.7" opacity="0.95"/><rect x="182.1" y="197.45" width="0.3" height="1.7" opacity="0.95"/>
<rect x="136.6" y="200.45" width="2.9" height="1.7" opacity="0.95"/><rect x="140.2" y="200.45" width="4.3" height="1.7" opacity="0.95"/><rect x="145.1" y="200.45" width="4.1" height="1.7" opacity="0.95"/><rect x="149.9" y="200.45" width="4.0" height="1.7" opacity="0.95"/><rect x="154.5" y="200.45" width="2.1" height="1.7" opacity="0.95"/><rect x="157.9" y="200.45" width="1.8" height="1.7" opacity="0.95"/><rect x="160.8" y="200.45" width="3.8" height="1.7" opacity="0.95"/><rect x="165.9" y="200.45" width="3.4" height="1.7" opacity="0.95"/><rect x="170.6" y="200.45" width="2.5" height="1.7" opacity="0.95"/><rect x="174.1" y="200.45" width="2.8" height="1.7" opacity="0.95"/><rect x="177.8" y="200.45" width="2.2" height="1.7" opacity="0.95"/><rect x="180.8" y="200.45" width="1.6" height="1.7" opacity="0.95"/>
<rect x="141.7" y="203.45" width="4.1" height="1.7" opacity="0.95"/><rect x="146.5" y="203.45" width="1.3" height="1.7" opacity="0.95"/><rect x="148.3" y="203.45" width="2.0" height="1.7" opacity="0.95"/><rect x="151.4" y="203.45" width="1.9" height="1.7" opacity="0.95"/><rect x="154.0" y="203.45" width="1.6" height="1.7" opacity="0.95"/><rect x="156.1" y="203.45" width="4.4" height="1.7" opacity="0.95"/><rect x="161.4" y="203.45" width="4.1" height="1.7" opacity="0.95"/><rect x="166.6" y="203.45" width="1.3" height="1.7" opacity="0.95"/><rect x="169.0" y="203.45" width="4.2" height="1.7" opacity="0.95"/><rect x="174.6" y="203.45" width="2.0" height="1.7" opacity="0.95"/><rect x="177.3" y="203.45" width="4.2" height="1.7" opacity="0.95"/>
<rect x="143.6" y="206.45" width="2.9" height="1.7" opacity="0.95"/><rect x="147.2" y="206.45" width="2.6" height="1.7" opacity="0.95"/><rect x="150.9" y="206.45" width="2.1" height="1.7" opacity="0.95"/><rect x="154.2" y="206.45" width="4.4" height="1.7" opacity="0.95"/><rect x="159.1" y="206.45" width="1.3" height="1.7" opacity="0.95"/><rect x="161.3" y="206.45" width="4.3" height="1.7" opacity="0.95"/><rect x="166.6" y="206.45" width="2.0" height="1.7" opacity="0.95"/><rect x="169.5" y="206.45" width="3.3" height="1.7" opacity="0.95"/><rect x="173.8" y="206.45" width="3.3" height="1.7" opacity="0.95"/><rect x="178.1" y="206.45" width="4.0" height="1.7" opacity="0.95"/>
<rect x="162.5" y="219.70" width="2.2" height="1.6" opacity="0.9"/><rect x="165.4" y="219.70" width="1.9" height="1.6" opacity="0.9"/><rect x="168.0" y="219.70" width="4.0" height="1.6" opacity="0.9"/><rect x="173.1" y="219.70" width="1.6" height="1.6" opacity="0.9"/><rect x="176.2" y="219.70" width="4.3" height="1.6" opacity="0.9"/><rect x="181.7" y="219.70" width="0.4" height="1.6" opacity="0.9"/>
<rect x="156.4" y="223.35" width="4.0" height="1.3" opacity="0.55"/><rect x="161.3" y="223.35" width="1.4" height="1.3" opacity="0.55"/><rect x="163.8" y="223.35" width="2.4" height="1.3" opacity="0.55"/><rect x="167.1" y="223.35" width="4.3" height="1.3" opacity="0.55"/><rect x="172.5" y="223.35" width="3.4" height="1.3" opacity="0.55"/><rect x="176.4" y="223.35" width="1.8" height="1.3" opacity="0.55"/><rect x="178.9" y="223.35" width="1.2" height="1.3" opacity="0.55"/><rect x="181.0" y="223.35" width="1.1" height="1.3" opacity="0.55"/>
</g>
<text x="153.6" y="216" font-family="Liberation Sans" font-weight="bold" font-style="italic" font-size="6.2" fill="#2a2622" filter="url(#b03)">d/g 2</text>
<g fill="#2a2622" filter="url(#b03)"><rect x="130.2" y="211.2" width="2.2" height="1.6"/><rect x="130.2" y="213.4" width="2.2" height="1.2"/><rect x="130.2" y="215.2" width="2.2" height="1.8"/><rect x="130.2" y="217.6" width="2.2" height="1.2"/><rect x="130.2" y="219.4" width="2.2" height="1.8"/><rect x="130.2" y="221.8" width="2.2" height="1.2"/><rect x="130.2" y="223.6" width="2.2" height="1.6"/></g>
<rect x="32.2" y="192.8" width="93" height="21.2" fill="#e8ebe4"/>
<g fill="#0e0e0e">
<rect x="32.2" y="192.8" width="3.6" height="21.2"/><rect x="36.6" y="192.8" width="0.7" height="21.2"/><rect x="121.4" y="192.8" width="2.6" height="21.2"/><rect x="124.6" y="192.8" width="0.7" height="21.2"/>
<rect x="38.20" y="192.80" width="1.40" height="1.1"/>
<rect x="40.10" y="192.80" width="0.80" height="1.1"/>
<rect x="41.60" y="192.80" width="1.00" height="1.1"/>
<rect x="43.30" y="192.80" width="1.00" height="1.1"/>
<rect x="44.70" y="192.80" width="1.40" height="1.1"/>
<rect x="46.80" y="192.80" width="0.80" height="1.1"/>
<rect x="48.30" y="192.80" width="1.40" height="1.1"/>
<rect x="50.70" y="192.80" width="2.60" height="1.1"/>
<rect x="53.80" y="192.80" width="1.00" height="1.1"/>
<rect x="55.80" y="192.80" width="3.00" height="1.1"/>
<rect x="59.20" y="192.80" width="0.80" height="1.1"/>
<rect x="60.70" y="192.80" width="3.00" height="1.1"/>
<rect x="64.10" y="192.80" width="1.00" height="1.1"/>
<rect x="65.80" y="192.80" width="2.00" height="1.1"/>
<rect x="68.20" y="192.80" width="1.40" height="1.1"/>
<rect x="70.00" y="192.80" width="1.40" height="1.1"/>
<rect x="72.10" y="192.80" width="2.60" height="1.1"/>
<rect x="75.20" y="192.80" width="0.80" height="1.1"/>
<rect x="77.00" y="192.80" width="2.00" height="1.1"/>
<rect x="79.50" y="192.80" width="2.60" height="1.1"/>
<rect x="83.10" y="192.80" width="1.40" height="1.1"/>
<rect x="85.20" y="192.80" width="2.60" height="1.1"/>
<rect x="88.50" y="192.80" width="1.00" height="1.1"/>
<rect x="90.20" y="192.80" width="2.60" height="1.1"/>
<rect x="93.80" y="192.80" width="2.60" height="1.1"/>
<rect x="96.90" y="192.80" width="0.80" height="1.1"/>
<rect x="98.70" y="192.80" width="2.60" height="1.1"/>
<rect x="102.00" y="192.80" width="2.60" height="1.1"/>
<rect x="105.60" y="192.80" width="1.00" height="1.1"/>
<rect x="107.60" y="192.80" width="3.00" height="1.1"/>
<rect x="111.60" y="192.80" width="2.00" height="1.1"/>
<rect x="114.00" y="192.80" width="3.00" height="1.1"/>
<rect x="118.00" y="192.80" width="2.80" height="1.1"/>
<rect x="38.20" y="193.86" width="0.80" height="1.1"/>
<rect x="39.40" y="193.86" width="0.80" height="1.1"/>
<rect x="40.70" y="193.86" width="2.60" height="1.1"/>
<rect x="44.00" y="193.86" width="0.80" height="1.1"/>
<rect x="45.50" y="193.86" width="3.00" height="1.1"/>
<rect x="49.20" y="193.86" width="2.00" height="1.1"/>
<rect x="51.60" y="193.86" width="2.60" height="1.1"/>
<rect x="54.60" y="193.86" width="2.60" height="1.1"/>
<rect x="58.20" y="193.86" width="2.60" height="1.1"/>
<rect x="61.30" y="193.86" width="1.40" height="1.1"/>
<rect x="63.40" y="193.86" width="0.80" height="1.1"/>
<rect x="64.90" y="193.86" width="3.00" height="1.1"/>
<rect x="68.30" y="193.86" width="2.60" height="1.1"/>
<rect x="71.90" y="193.86" width="2.00" height="1.1"/>
<rect x="74.30" y="193.86" width="2.60" height="1.1"/>
<rect x="77.90" y="193.86" width="0.80" height="1.1"/>
<rect x="79.40" y="193.86" width="1.40" height="1.1"/>
<rect x="81.20" y="193.86" width="3.00" height="1.1"/>
<rect x="84.90" y="193.86" width="1.00" height="1.1"/>
<rect x="86.40" y="193.86" width="1.00" height="1.1"/>
<rect x="88.10" y="193.86" width="1.40" height="1.1"/>
<rect x="90.20" y="193.86" width="0.80" height="1.1"/>
<rect x="91.70" y="193.86" width="2.60" height="1.1"/>
<rect x="95.00" y="193.86" width="3.00" height="1.1"/>
<rect x="98.40" y="193.86" width="2.00" height="1.1"/>
<rect x="100.90" y="193.86" width="0.80" height="1.1"/>
<rect x="102.70" y="193.86" width="1.00" height="1.1"/>
<rect x="104.40" y="193.86" width="1.40" height="1.1"/>
<rect x="106.50" y="193.86" width="2.00" height="1.1"/>
<rect x="109.50" y="193.86" width="1.00" height="1.1"/>
<rect x="110.90" y="193.86" width="1.40" height="1.1"/>
<rect x="112.70" y="193.86" width="1.40" height="1.1"/>
<rect x="114.80" y="193.86" width="2.60" height="1.1"/>
<rect x="117.80" y="193.86" width="2.60" height="1.1"/>
<rect x="38.20" y="194.92" width="2.60" height="1.1"/>
<rect x="41.50" y="194.92" width="1.40" height="1.1"/>
<rect x="43.90" y="194.92" width="1.40" height="1.1"/>
<rect x="46.00" y="194.92" width="1.40" height="1.1"/>
<rect x="48.10" y="194.92" width="3.00" height="1.1"/>
<rect x="51.50" y="194.92" width="2.00" height="1.1"/>
<rect x="54.00" y="194.92" width="1.40" height="1.1"/>
<rect x="55.80" y="194.92" width="1.40" height="1.1"/>
<rect x="57.60" y="194.92" width="1.40" height="1.1"/>
<rect x="59.70" y="194.92" width="0.80" height="1.1"/>
<rect x="61.50" y="194.92" width="1.40" height="1.1"/>
<rect x="63.60" y="194.92" width="1.40" height="1.1"/>
<rect x="65.50" y="194.92" width="1.00" height="1.1"/>
<rect x="66.90" y="194.92" width="2.00" height="1.1"/>
<rect x="69.30" y="194.92" width="1.00" height="1.1"/>
<rect x="71.30" y="194.92" width="1.40" height="1.1"/>
<rect x="73.40" y="194.92" width="1.00" height="1.1"/>
<rect x="75.40" y="194.92" width="3.00" height="1.1"/>
<rect x="79.40" y="194.92" width="1.40" height="1.1"/>
<rect x="81.20" y="194.92" width="2.60" height="1.1"/>
<rect x="84.50" y="194.92" width="1.00" height="1.1"/>
<rect x="86.20" y="194.92" width="1.40" height="1.1"/>
<rect x="88.30" y="194.92" width="0.80" height="1.1"/>
<rect x="89.60" y="194.92" width="0.80" height="1.1"/>
<rect x="91.10" y="194.92" width="2.60" height="1.1"/>
<rect x="94.40" y="194.92" width="1.40" height="1.1"/>
<rect x="96.50" y="194.92" width="2.60" height="1.1"/>
<rect x="99.60" y="194.92" width="1.40" height="1.1"/>
<rect x="101.70" y="194.92" width="1.40" height="1.1"/>
<rect x="103.80" y="194.92" width="0.80" height="1.1"/>
<rect x="105.30" y="194.92" width="0.80" height="1.1"/>
<rect x="106.80" y="194.92" width="3.00" height="1.1"/>
<rect x="110.50" y="194.92" width="3.00" height="1.1"/>
<rect x="114.20" y="194.92" width="0.80" height="1.1"/>
<rect x="115.50" y="194.92" width="2.60" height="1.1"/>
<rect x="118.50" y="194.92" width="2.30" height="1.1"/>
<rect x="38.20" y="195.98" width="1.40" height="1.1"/>
<rect x="40.30" y="195.98" width="0.80" height="1.1"/>
<rect x="41.80" y="195.98" width="1.40" height="1.1"/>
<rect x="44.20" y="195.98" width="0.80" height="1.1"/>
<rect x="45.70" y="195.98" width="1.40" height="1.1"/>
<rect x="47.80" y="195.98" width="3.00" height="1.1"/>
<rect x="51.20" y="195.98" width="1.40" height="1.1"/>
<rect x="53.00" y="195.98" width="0.80" height="1.1"/>
<rect x="54.50" y="195.98" width="2.60" height="1.1"/>
<rect x="57.60" y="195.98" width="1.00" height="1.1"/>
<rect x="59.30" y="195.98" width="1.40" height="1.1"/>
<rect x="61.70" y="195.98" width="1.40" height="1.1"/>
<rect x="63.60" y="195.98" width="3.00" height="1.1"/>
<rect x="67.30" y="195.98" width="3.00" height="1.1"/>
<rect x="71.00" y="195.98" width="0.80" height="1.1"/>
<rect x="72.50" y="195.98" width="2.00" height="1.1"/>
<rect x="75.50" y="195.98" width="1.00" height="1.1"/>
<rect x="76.90" y="195.98" width="0.80" height="1.1"/>
<rect x="78.40" y="195.98" width="1.40" height="1.1"/>
<rect x="80.80" y="195.98" width="3.00" height="1.1"/>
<rect x="84.30" y="195.98" width="2.60" height="1.1"/>
<rect x="87.60" y="195.98" width="1.40" height="1.1"/>
<rect x="89.40" y="195.98" width="2.00" height="1.1"/>
<rect x="91.90" y="195.98" width="1.00" height="1.1"/>
<rect x="93.60" y="195.98" width="1.40" height="1.1"/>
<rect x="95.70" y="195.98" width="1.40" height="1.1"/>
<rect x="97.80" y="195.98" width="1.40" height="1.1"/>
<rect x="99.90" y="195.98" width="1.40" height="1.1"/>
<rect x="101.80" y="195.98" width="1.40" height="1.1"/>
<rect x="103.90" y="195.98" width="2.00" height="1.1"/>
<rect x="106.60" y="195.98" width="0.80" height="1.1"/>
<rect x="107.90" y="195.98" width="2.60" height="1.1"/>
<rect x="111.00" y="195.98" width="0.80" height="1.1"/>
<rect x="112.30" y="195.98" width="2.00" height="1.1"/>
<rect x="115.00" y="195.98" width="2.00" height="1.1"/>
<rect x="117.50" y="195.98" width="1.40" height="1.1"/>
<rect x="119.60" y="195.98" width="1.20" height="1.1"/>
<rect x="38.20" y="197.04" width="1.40" height="1.1"/>
<rect x="40.10" y="197.04" width="2.00" height="1.1"/>
<rect x="42.60" y="197.04" width="1.00" height="1.1"/>
<rect x="44.00" y="197.04" width="1.00" height="1.1"/>
<rect x="45.70" y="197.04" width="2.00" height="1.1"/>
<rect x="48.10" y="197.04" width="1.40" height="1.1"/>
<rect x="50.00" y="197.04" width="1.40" height="1.1"/>
<rect x="52.10" y="197.04" width="3.00" height="1.1"/>
<rect x="56.10" y="197.04" width="1.00" height="1.1"/>
<rect x="57.50" y="197.04" width="2.60" height="1.1"/>
<rect x="60.80" y="197.04" width="1.40" height="1.1"/>
<rect x="62.90" y="197.04" width="2.60" height="1.1"/>
<rect x="66.50" y="197.04" width="1.00" height="1.1"/>
<rect x="68.20" y="197.04" width="1.40" height="1.1"/>
<rect x="70.30" y="197.04" width="3.00" height="1.1"/>
<rect x="73.70" y="197.04" width="1.40" height="1.1"/>
<rect x="75.80" y="197.04" width="2.00" height="1.1"/>
<rect x="78.50" y="197.04" width="1.00" height="1.1"/>
<rect x="80.50" y="197.04" width="2.00" height="1.1"/>
<rect x="83.00" y="197.04" width="0.80" height="1.1"/>
<rect x="84.50" y="197.04" width="1.00" height="1.1"/>
<rect x="86.20" y="197.04" width="1.40" height="1.1"/>
<rect x="88.30" y="197.04" width="1.40" height="1.1"/>
<rect x="90.40" y="197.04" width="3.00" height="1.1"/>
<rect x="93.80" y="197.04" width="1.00" height="1.1"/>
<rect x="95.20" y="197.04" width="1.40" height="1.1"/>
<rect x="97.30" y="197.04" width="2.00" height="1.1"/>
<rect x="100.00" y="197.04" width="0.80" height="1.1"/>
<rect x="101.20" y="197.04" width="1.40" height="1.1"/>
<rect x="103.60" y="197.04" width="3.00" height="1.1"/>
<rect x="107.30" y="197.04" width="1.40" height="1.1"/>
<rect x="109.20" y="197.04" width="3.00" height="1.1"/>
<rect x="112.60" y="197.04" width="1.00" height="1.1"/>
<rect x="114.10" y="197.04" width="1.00" height="1.1"/>
<rect x="116.10" y="197.04" width="2.60" height="1.1"/>
<rect x="119.10" y="197.04" width="1.70" height="1.1"/>
<rect x="38.20" y="198.10" width="0.80" height="1.1"/>
<rect x="40.00" y="198.10" width="3.00" height="1.1"/>
<rect x="43.40" y="198.10" width="0.80" height="1.1"/>
<rect x="44.70" y="198.10" width="1.00" height="1.1"/>
<rect x="46.70" y="198.10" width="0.80" height="1.1"/>
<rect x="48.20" y="198.10" width="1.00" height="1.1"/>
<rect x="49.90" y="198.10" width="2.00" height="1.1"/>
<rect x="52.60" y="198.10" width="2.60" height="1.1"/>
<rect x="55.60" y="198.10" width="0.80" height="1.1"/>
<rect x="56.80" y="198.10" width="1.40" height="1.1"/>
<rect x="59.20" y="198.10" width="2.00" height="1.1"/>
<rect x="61.70" y="198.10" width="1.40" height="1.1"/>
<rect x="63.80" y="198.10" width="1.00" height="1.1"/>
<rect x="65.80" y="198.10" width="0.80" height="1.1"/>
<rect x="67.00" y="198.10" width="2.00" height="1.1"/>
<rect x="69.70" y="198.10" width="1.40" height="1.1"/>
<rect x="71.80" y="198.10" width="1.40" height="1.1"/>
<rect x="73.70" y="198.10" width="1.40" height="1.1"/>
<rect x="76.10" y="198.10" width="1.00" height="1.1"/>
<rect x="78.10" y="198.10" width="1.00" height="1.1"/>
<rect x="79.50" y="198.10" width="1.40" height="1.1"/>
<rect x="81.60" y="198.10" width="0.80" height="1.1"/>
<rect x="82.80" y="198.10" width="1.00" height="1.1"/>
<rect x="84.50" y="198.10" width="2.60" height="1.1"/>
<rect x="87.80" y="198.10" width="0.80" height="1.1"/>
<rect x="89.30" y="198.10" width="1.00" height="1.1"/>
<rect x="91.00" y="198.10" width="1.40" height="1.1"/>
<rect x="92.90" y="198.10" width="1.40" height="1.1"/>
<rect x="94.70" y="198.10" width="2.60" height="1.1"/>
<rect x="98.00" y="198.10" width="2.60" height="1.1"/>
<rect x="101.30" y="198.10" width="1.40" height="1.1"/>
<rect x="103.40" y="198.10" width="1.00" height="1.1"/>
<rect x="104.80" y="198.10" width="3.00" height="1.1"/>
<rect x="108.50" y="198.10" width="2.60" height="1.1"/>
<rect x="112.10" y="198.10" width="0.80" height="1.1"/>
<rect x="113.40" y="198.10" width="1.40" height="1.1"/>
<rect x="115.30" y="198.10" width="1.40" height="1.1"/>
<rect x="117.20" y="198.10" width="1.00" height="1.1"/>
<rect x="118.90" y="198.10" width="1.00" height="1.1"/>
<rect x="38.20" y="199.16" width="3.00" height="1.1"/>
<rect x="41.90" y="199.16" width="0.80" height="1.1"/>
<rect x="43.70" y="199.16" width="1.40" height="1.1"/>
<rect x="46.10" y="199.16" width="1.00" height="1.1"/>
<rect x="47.60" y="199.16" width="1.40" height="1.1"/>
<rect x="49.70" y="199.16" width="2.60" height="1.1"/>
<rect x="52.70" y="199.16" width="2.00" height="1.1"/>
<rect x="55.20" y="199.16" width="1.40" height="1.1"/>
<rect x="57.00" y="199.16" width="1.00" height="1.1"/>
<rect x="58.40" y="199.16" width="2.00" height="1.1"/>
<rect x="60.90" y="199.16" width="1.40" height="1.1"/>
<rect x="62.70" y="199.16" width="2.60" height="1.1"/>
<rect x="65.70" y="199.16" width="1.00" height="1.1"/>
<rect x="67.40" y="199.16" width="1.40" height="1.1"/>
<rect x="69.50" y="199.16" width="2.60" height="1.1"/>
<rect x="72.50" y="199.16" width="0.80" height="1.1"/>
<rect x="73.80" y="199.16" width="1.40" height="1.1"/>
<rect x="75.70" y="199.16" width="1.00" height="1.1"/>
<rect x="77.70" y="199.16" width="2.60" height="1.1"/>
<rect x="81.00" y="199.16" width="0.80" height="1.1"/>
<rect x="82.50" y="199.16" width="2.60" height="1.1"/>
<rect x="85.80" y="199.16" width="3.00" height="1.1"/>
<rect x="89.50" y="199.16" width="1.40" height="1.1"/>
<rect x="91.60" y="199.16" width="1.00" height="1.1"/>
<rect x="93.00" y="199.16" width="0.80" height="1.1"/>
<rect x="94.20" y="199.16" width="1.40" height="1.1"/>
<rect x="96.00" y="199.16" width="1.40" height="1.1"/>
<rect x="98.10" y="199.16" width="0.80" height="1.1"/>
<rect x="99.90" y="199.16" width="3.00" height="1.1"/>
<rect x="103.40" y="199.16" width="1.40" height="1.1"/>
<rect x="105.50" y="199.16" width="3.00" height="1.1"/>
<rect x="109.20" y="199.16" width="3.00" height="1.1"/>
<rect x="112.90" y="199.16" width="0.80" height="1.1"/>
<rect x="114.10" y="199.16" width="2.60" height="1.1"/>
<rect x="117.40" y="199.16" width="1.00" height="1.1"/>
<rect x="119.10" y="199.16" width="1.70" height="1.1"/>
<rect x="38.20" y="200.22" width="1.00" height="1.1"/>
<rect x="39.90" y="200.22" width="1.40" height="1.1"/>
<rect x="42.00" y="200.22" width="0.80" height="1.1"/>
<rect x="43.50" y="200.22" width="1.00" height="1.1"/>
<rect x="45.20" y="200.22" width="0.80" height="1.1"/>
<rect x="46.70" y="200.22" width="0.80" height="1.1"/>
<rect x="48.20" y="200.22" width="0.80" height="1.1"/>
<rect x="49.40" y="200.22" width="1.40" height="1.1"/>
<rect x="51.30" y="200.22" width="2.60" height="1.1"/>
<rect x="54.30" y="200.22" width="2.00" height="1.1"/>
<rect x="57.00" y="200.22" width="1.40" height="1.1"/>
<rect x="59.10" y="200.22" width="1.40" height="1.1"/>
<rect x="61.50" y="200.22" width="0.80" height="1.1"/>
<rect x="63.00" y="200.22" width="2.60" height="1.1"/>
<rect x="66.30" y="200.22" width="1.40" height="1.1"/>
<rect x="68.40" y="200.22" width="0.80" height="1.1"/>
<rect x="70.20" y="200.22" width="3.00" height="1.1"/>
<rect x="73.60" y="200.22" width="0.80" height="1.1"/>
<rect x="74.90" y="200.22" width="0.80" height="1.1"/>
<rect x="76.40" y="200.22" width="2.60" height="1.1"/>
<rect x="79.70" y="200.22" width="3.00" height="1.1"/>
<rect x="83.40" y="200.22" width="3.00" height="1.1"/>
<rect x="87.10" y="200.22" width="1.40" height="1.1"/>
<rect x="89.20" y="200.22" width="1.00" height="1.1"/>
<rect x="90.90" y="200.22" width="1.00" height="1.1"/>
<rect x="92.30" y="200.22" width="3.00" height="1.1"/>
<rect x="96.00" y="200.22" width="3.00" height="1.1"/>
<rect x="99.50" y="200.22" width="2.00" height="1.1"/>
<rect x="102.00" y="200.22" width="1.40" height="1.1"/>
<rect x="104.10" y="200.22" width="1.40" height="1.1"/>
<rect x="106.20" y="200.22" width="3.00" height="1.1"/>
<rect x="110.20" y="200.22" width="0.80" height="1.1"/>
<rect x="112.00" y="200.22" width="1.00" height="1.1"/>
<rect x="113.70" y="200.22" width="3.00" height="1.1"/>
<rect x="117.20" y="200.22" width="1.00" height="1.1"/>
<rect x="118.90" y="200.22" width="0.80" height="1.1"/>
<rect x="120.10" y="200.22" width="0.70" height="1.1"/>
<rect x="38.20" y="201.28" width="2.00" height="1.1"/>
<rect x="40.90" y="201.28" width="1.00" height="1.1"/>
<rect x="42.60" y="201.28" width="0.80" height="1.1"/>
<rect x="43.80" y="201.28" width="1.40" height="1.1"/>
<rect x="46.20" y="201.28" width="0.80" height="1.1"/>
<rect x="47.50" y="201.28" width="0.80" height="1.1"/>
<rect x="49.00" y="201.28" width="1.40" height="1.1"/>
<rect x="51.10" y="201.28" width="1.00" height="1.1"/>
<rect x="52.60" y="201.28" width="1.00" height="1.1"/>
<rect x="54.30" y="201.28" width="1.40" height="1.1"/>
<rect x="56.70" y="201.28" width="2.60" height="1.1"/>
<rect x="59.80" y="201.28" width="2.60" height="1.1"/>
<rect x="63.40" y="201.28" width="3.00" height="1.1"/>
<rect x="66.80" y="201.28" width="3.00" height="1.1"/>
<rect x="70.50" y="201.28" width="1.40" height="1.1"/>
<rect x="72.60" y="201.28" width="2.00" height="1.1"/>
<rect x="75.30" y="201.28" width="1.40" height="1.1"/>
<rect x="77.40" y="201.28" width="2.60" height="1.1"/>
<rect x="80.70" y="201.28" width="1.00" height="1.1"/>
<rect x="82.40" y="201.28" width="1.00" height="1.1"/>
<rect x="83.90" y="201.28" width="1.00" height="1.1"/>
<rect x="85.40" y="201.28" width="1.00" height="1.1"/>
<rect x="87.10" y="201.28" width="2.00" height="1.1"/>
<rect x="89.60" y="201.28" width="1.40" height="1.1"/>
<rect x="91.40" y="201.28" width="1.40" height="1.1"/>
<rect x="93.50" y="201.28" width="1.00" height="1.1"/>
<rect x="95.50" y="201.28" width="2.00" height="1.1"/>
<rect x="98.00" y="201.28" width="2.60" height="1.1"/>
<rect x="101.00" y="201.28" width="2.60" height="1.1"/>
<rect x="104.30" y="201.28" width="0.80" height="1.1"/>
<rect x="105.50" y="201.28" width="0.80" height="1.1"/>
<rect x="107.00" y="201.28" width="3.00" height="1.1"/>
<rect x="110.50" y="201.28" width="3.00" height="1.1"/>
<rect x="114.20" y="201.28" width="1.40" height="1.1"/>
<rect x="116.00" y="201.28" width="1.40" height="1.1"/>
<rect x="117.90" y="201.28" width="0.80" height="1.1"/>
<rect x="119.10" y="201.28" width="1.00" height="1.1"/>
<rect x="38.20" y="202.34" width="3.00" height="1.1"/>
<rect x="42.20" y="202.34" width="1.00" height="1.1"/>
<rect x="43.60" y="202.34" width="1.40" height="1.1"/>
<rect x="46.00" y="202.34" width="3.00" height="1.1"/>
<rect x="49.50" y="202.34" width="1.40" height="1.1"/>
<rect x="51.90" y="202.34" width="1.40" height="1.1"/>
<rect x="53.70" y="202.34" width="0.80" height="1.1"/>
<rect x="55.50" y="202.34" width="2.60" height="1.1"/>
<rect x="59.10" y="202.34" width="1.40" height="1.1"/>
<rect x="61.00" y="202.34" width="0.80" height="1.1"/>
<rect x="62.50" y="202.34" width="1.40" height="1.1"/>
<rect x="64.40" y="202.34" width="0.80" height="1.1"/>
<rect x="65.70" y="202.34" width="1.40" height="1.1"/>
<rect x="67.50" y="202.34" width="2.00" height="1.1"/>
<rect x="70.00" y="202.34" width="3.00" height="1.1"/>
<rect x="73.40" y="202.34" width="3.00" height="1.1"/>
<rect x="77.10" y="202.34" width="1.40" height="1.1"/>
<rect x="79.20" y="202.34" width="1.00" height="1.1"/>
<rect x="81.20" y="202.34" width="1.40" height="1.1"/>
<rect x="83.00" y="202.34" width="1.00" height="1.1"/>
<rect x="84.40" y="202.34" width="3.00" height="1.1"/>
<rect x="88.10" y="202.34" width="2.00" height="1.1"/>
<rect x="90.80" y="202.34" width="0.80" height="1.1"/>
<rect x="92.30" y="202.34" width="0.80" height="1.1"/>
<rect x="93.80" y="202.34" width="2.60" height="1.1"/>
<rect x="97.40" y="202.34" width="1.00" height="1.1"/>
<rect x="99.40" y="202.34" width="0.80" height="1.1"/>
<rect x="100.70" y="202.34" width="1.40" height="1.1"/>
<rect x="102.80" y="202.34" width="1.40" height="1.1"/>
<rect x="104.90" y="202.34" width="2.60" height="1.1"/>
<rect x="108.20" y="202.34" width="1.40" height="1.1"/>
<rect x="110.00" y="202.34" width="1.40" height="1.1"/>
<rect x="112.40" y="202.34" width="1.40" height="1.1"/>
<rect x="114.50" y="202.34" width="1.40" height="1.1"/>
<rect x="116.30" y="202.34" width="3.00" height="1.1"/>
<rect x="120.00" y="202.34" width="0.80" height="1.1"/>
<rect x="38.20" y="203.40" width="1.40" height="1.1"/>
<rect x="40.30" y="203.40" width="1.00" height="1.1"/>
<rect x="41.70" y="203.40" width="1.40" height="1.1"/>
<rect x="43.60" y="203.40" width="1.40" height="1.1"/>
<rect x="45.40" y="203.40" width="3.00" height="1.1"/>
<rect x="48.80" y="203.40" width="1.40" height="1.1"/>
<rect x="51.20" y="203.40" width="1.40" height="1.1"/>
<rect x="53.30" y="203.40" width="3.00" height="1.1"/>
<rect x="56.80" y="203.40" width="1.00" height="1.1"/>
<rect x="58.20" y="203.40" width="0.80" height="1.1"/>
<rect x="60.00" y="203.40" width="1.00" height="1.1"/>
<rect x="61.70" y="203.40" width="0.80" height="1.1"/>
<rect x="63.50" y="203.40" width="2.00" height="1.1"/>
<rect x="66.20" y="203.40" width="2.60" height="1.1"/>
<rect x="69.80" y="203.40" width="1.00" height="1.1"/>
<rect x="71.30" y="203.40" width="1.40" height="1.1"/>
<rect x="73.40" y="203.40" width="1.00" height="1.1"/>
<rect x="75.40" y="203.40" width="1.00" height="1.1"/>
<rect x="76.80" y="203.40" width="0.80" height="1.1"/>
<rect x="78.30" y="203.40" width="1.40" height="1.1"/>
<rect x="80.20" y="203.40" width="1.40" height="1.1"/>
<rect x="82.10" y="203.40" width="3.00" height="1.1"/>
<rect x="85.50" y="203.40" width="1.40" height="1.1"/>
<rect x="87.60" y="203.40" width="0.80" height="1.1"/>
<rect x="89.40" y="203.40" width="2.60" height="1.1"/>
<rect x="92.70" y="203.40" width="0.80" height="1.1"/>
<rect x="94.50" y="203.40" width="2.60" height="1.1"/>
<rect x="97.60" y="203.40" width="2.60" height="1.1"/>
<rect x="100.70" y="203.40" width="2.00" height="1.1"/>
<rect x="103.40" y="203.40" width="2.00" height="1.1"/>
<rect x="105.90" y="203.40" width="3.00" height="1.1"/>
<rect x="109.60" y="203.40" width="1.00" height="1.1"/>
<rect x="111.60" y="203.40" width="1.00" height="1.1"/>
<rect x="113.00" y="203.40" width="1.40" height="1.1"/>
<rect x="115.40" y="203.40" width="1.00" height="1.1"/>
<rect x="117.10" y="203.40" width="1.40" height="1.1"/>
<rect x="118.90" y="203.40" width="1.00" height="1.1"/>
<rect x="120.40" y="203.40" width="0.40" height="1.1"/>
<rect x="38.20" y="204.46" width="0.80" height="1.1"/>
<rect x="40.00" y="204.46" width="3.00" height="1.1"/>
<rect x="43.40" y="204.46" width="2.60" height="1.1"/>
<rect x="46.70" y="204.46" width="0.80" height="1.1"/>
<rect x="48.20" y="204.46" width="2.00" height="1.1"/>
<rect x="50.90" y="204.46" width="2.00" height="1.1"/>
<rect x="53.60" y="204.46" width="2.60" height="1.1"/>
<rect x="56.90" y="204.46" width="1.40" height="1.1"/>
<rect x="59.30" y="204.46" width="1.00" height="1.1"/>
<rect x="61.00" y="204.46" width="1.40" height="1.1"/>
<rect x="63.10" y="204.46" width="1.40" height="1.1"/>
<rect x="65.50" y="204.46" width="1.40" height="1.1"/>
<rect x="67.40" y="204.46" width="0.80" height="1.1"/>
<rect x="68.60" y="204.46" width="2.00" height="1.1"/>
<rect x="71.30" y="204.46" width="1.40" height="1.1"/>
<rect x="73.20" y="204.46" width="1.40" height="1.1"/>
<rect x="75.60" y="204.46" width="3.00" height="1.1"/>
<rect x="79.30" y="204.46" width="3.00" height="1.1"/>
<rect x="82.80" y="204.46" width="3.00" height="1.1"/>
<rect x="86.50" y="204.46" width="1.40" height="1.1"/>
<rect x="88.30" y="204.46" width="0.80" height="1.1"/>
<rect x="89.60" y="204.46" width="1.40" height="1.1"/>
<rect x="91.70" y="204.46" width="1.40" height="1.1"/>
<rect x="93.50" y="204.46" width="3.00" height="1.1"/>
<rect x="97.20" y="204.46" width="2.00" height="1.1"/>
<rect x="100.20" y="204.46" width="2.60" height="1.1"/>
<rect x="103.20" y="204.46" width="0.80" height="1.1"/>
<rect x="104.50" y="204.46" width="0.80" height="1.1"/>
<rect x="106.00" y="204.46" width="3.00" height="1.1"/>
<rect x="110.00" y="204.46" width="0.80" height="1.1"/>
<rect x="111.20" y="204.46" width="3.00" height="1.1"/>
<rect x="115.20" y="204.46" width="1.40" height="1.1"/>
<rect x="117.10" y="204.46" width="0.80" height="1.1"/>
<rect x="118.30" y="204.46" width="2.00" height="1.1"/>
<rect x="38.20" y="205.52" width="1.00" height="1.1"/>
<rect x="39.70" y="205.52" width="1.40" height="1.1"/>
<rect x="41.80" y="205.52" width="3.00" height="1.1"/>
<rect x="45.30" y="205.52" width="2.60" height="1.1"/>
<rect x="48.40" y="205.52" width="0.80" height="1.1"/>
<rect x="49.90" y="205.52" width="2.00" height="1.1"/>
<rect x="52.60" y="205.52" width="1.00" height="1.1"/>
<rect x="54.30" y="205.52" width="2.00" height="1.1"/>
<rect x="57.00" y="205.52" width="3.00" height="1.1"/>
<rect x="60.70" y="205.52" width="1.00" height="1.1"/>
<rect x="62.40" y="205.52" width="2.00" height="1.1"/>
<rect x="65.10" y="205.52" width="1.00" height="1.1"/>
<rect x="67.10" y="205.52" width="1.40" height="1.1"/>
<rect x="69.50" y="205.52" width="2.00" height="1.1"/>
<rect x="72.00" y="205.52" width="1.40" height="1.1"/>
<rect x="74.10" y="205.52" width="0.80" height="1.1"/>
<rect x="75.40" y="205.52" width="1.00" height="1.1"/>
<rect x="77.10" y="205.52" width="1.00" height="1.1"/>
<rect x="78.80" y="205.52" width="2.60" height="1.1"/>
<rect x="82.10" y="205.52" width="1.40" height="1.1"/>
<rect x="84.00" y="205.52" width="3.00" height="1.1"/>
<rect x="87.70" y="205.52" width="0.80" height="1.1"/>
<rect x="89.50" y="205.52" width="0.80" height="1.1"/>
<rect x="91.00" y="205.52" width="3.00" height="1.1"/>
<rect x="94.70" y="205.52" width="2.00" height="1.1"/>
<rect x="97.70" y="205.52" width="2.00" height="1.1"/>
<rect x="100.10" y="205.52" width="1.40" height="1.1"/>
<rect x="102.50" y="205.52" width="2.60" height="1.1"/>
<rect x="105.80" y="205.52" width="2.60" height="1.1"/>
<rect x="109.10" y="205.52" width="1.40" height="1.1"/>
<rect x="111.20" y="205.52" width="1.40" height="1.1"/>
<rect x="113.60" y="205.52" width="1.00" height="1.1"/>
<rect x="115.30" y="205.52" width="1.40" height="1.1"/>
<rect x="117.10" y="205.52" width="1.40" height="1.1"/>
<rect x="119.00" y="205.52" width="1.00" height="1.1"/>
<rect x="38.20" y="206.58" width="2.60" height="1.1"/>
<rect x="41.20" y="206.58" width="1.40" height="1.1"/>
<rect x="43.60" y="206.58" width="1.40" height="1.1"/>
<rect x="45.70" y="206.58" width="2.60" height="1.1"/>
<rect x="49.30" y="206.58" width="2.60" height="1.1"/>
<rect x="52.60" y="206.58" width="2.60" height="1.1"/>
<rect x="55.60" y="206.58" width="2.60" height="1.1"/>
<rect x="58.60" y="206.58" width="1.00" height="1.1"/>
<rect x="60.10" y="206.58" width="1.40" height="1.1"/>
<rect x="62.50" y="206.58" width="2.60" height="1.1"/>
<rect x="65.80" y="206.58" width="1.40" height="1.1"/>
<rect x="68.20" y="206.58" width="1.40" height="1.1"/>
<rect x="70.00" y="206.58" width="1.00" height="1.1"/>
<rect x="71.70" y="206.58" width="1.00" height="1.1"/>
<rect x="73.70" y="206.58" width="2.60" height="1.1"/>
<rect x="76.70" y="206.58" width="0.80" height="1.1"/>
<rect x="77.90" y="206.58" width="0.80" height="1.1"/>
<rect x="79.70" y="206.58" width="1.40" height="1.1"/>
<rect x="81.80" y="206.58" width="0.80" height="1.1"/>
<rect x="83.60" y="206.58" width="1.40" height="1.1"/>
<rect x="86.00" y="206.58" width="1.00" height="1.1"/>
<rect x="87.70" y="206.58" width="2.00" height="1.1"/>
<rect x="90.40" y="206.58" width="2.00" height="1.1"/>
<rect x="92.90" y="206.58" width="1.00" height="1.1"/>
<rect x="94.60" y="206.58" width="2.00" height="1.1"/>
<rect x="97.30" y="206.58" width="1.00" height="1.1"/>
<rect x="98.80" y="206.58" width="0.80" height="1.1"/>
<rect x="100.10" y="206.58" width="2.60" height="1.1"/>
<rect x="103.20" y="206.58" width="1.40" height="1.1"/>
<rect x="105.00" y="206.58" width="0.80" height="1.1"/>
<rect x="106.30" y="206.58" width="3.00" height="1.1"/>
<rect x="110.00" y="206.58" width="1.40" height="1.1"/>
<rect x="112.10" y="206.58" width="0.80" height="1.1"/>
<rect x="113.30" y="206.58" width="2.60" height="1.1"/>
<rect x="116.90" y="206.58" width="1.40" height="1.1"/>
<rect x="119.30" y="206.58" width="1.50" height="1.1"/>
<rect x="38.20" y="207.64" width="1.40" height="1.1"/>
<rect x="40.60" y="207.64" width="2.00" height="1.1"/>
<rect x="43.30" y="207.64" width="1.00" height="1.1"/>
<rect x="44.80" y="207.64" width="0.80" height="1.1"/>
<rect x="46.00" y="207.64" width="0.80" height="1.1"/>
<rect x="47.80" y="207.64" width="0.80" height="1.1"/>
<rect x="49.30" y="207.64" width="1.00" height="1.1"/>
<rect x="50.80" y="207.64" width="1.00" height="1.1"/>
<rect x="52.20" y="207.64" width="3.00" height="1.1"/>
<rect x="55.60" y="207.64" width="0.80" height="1.1"/>
<rect x="57.40" y="207.64" width="2.00" height="1.1"/>
<rect x="59.90" y="207.64" width="1.00" height="1.1"/>
<rect x="61.60" y="207.64" width="1.00" height="1.1"/>
<rect x="63.60" y="207.64" width="2.00" height="1.1"/>
<rect x="66.60" y="207.64" width="2.60" height="1.1"/>
<rect x="69.90" y="207.64" width="3.00" height="1.1"/>
<rect x="73.90" y="207.64" width="1.00" height="1.1"/>
<rect x="75.90" y="207.64" width="1.40" height="1.1"/>
<rect x="77.70" y="207.64" width="1.40" height="1.1"/>
<rect x="79.50" y="207.64" width="2.60" height="1.1"/>
<rect x="82.80" y="207.64" width="2.60" height="1.1"/>
<rect x="86.40" y="207.64" width="0.80" height="1.1"/>
<rect x="87.90" y="207.64" width="3.00" height="1.1"/>
<rect x="91.60" y="207.64" width="2.60" height="1.1"/>
<rect x="94.90" y="207.64" width="0.80" height="1.1"/>
<rect x="96.40" y="207.64" width="1.00" height="1.1"/>
<rect x="97.90" y="207.64" width="0.80" height="1.1"/>
<rect x="99.40" y="207.64" width="1.00" height="1.1"/>
<rect x="100.80" y="207.64" width="0.80" height="1.1"/>
<rect x="102.30" y="207.64" width="2.60" height="1.1"/>
<rect x="105.60" y="207.64" width="2.60" height="1.1"/>
<rect x="108.60" y="207.64" width="1.40" height="1.1"/>
<rect x="111.00" y="207.64" width="2.60" height="1.1"/>
<rect x="114.30" y="207.64" width="2.60" height="1.1"/>
<rect x="117.90" y="207.64" width="1.40" height="1.1"/>
<rect x="120.00" y="207.64" width="0.80" height="1.1"/>
<rect x="38.20" y="208.70" width="0.80" height="1.1"/>
<rect x="40.00" y="208.70" width="0.80" height="1.1"/>
<rect x="41.30" y="208.70" width="1.40" height="1.1"/>
<rect x="43.20" y="208.70" width="3.00" height="1.1"/>
<rect x="46.70" y="208.70" width="1.00" height="1.1"/>
<rect x="48.40" y="208.70" width="1.00" height="1.1"/>
<rect x="50.10" y="208.70" width="1.40" height="1.1"/>
<rect x="52.50" y="208.70" width="1.00" height="1.1"/>
<rect x="54.20" y="208.70" width="3.00" height="1.1"/>
<rect x="58.20" y="208.70" width="1.40" height="1.1"/>
<rect x="60.30" y="208.70" width="3.00" height="1.1"/>
<rect x="64.30" y="208.70" width="2.60" height="1.1"/>
<rect x="67.30" y="208.70" width="3.00" height="1.1"/>
<rect x="70.70" y="208.70" width="1.40" height="1.1"/>
<rect x="72.60" y="208.70" width="2.00" height="1.1"/>
<rect x="75.30" y="208.70" width="3.00" height="1.1"/>
<rect x="78.80" y="208.70" width="1.40" height="1.1"/>
<rect x="81.20" y="208.70" width="2.00" height="1.1"/>
<rect x="83.60" y="208.70" width="2.00" height="1.1"/>
<rect x="86.10" y="208.70" width="1.00" height="1.1"/>
<rect x="87.50" y="208.70" width="0.80" height="1.1"/>
<rect x="88.70" y="208.70" width="0.80" height="1.1"/>
<rect x="90.50" y="208.70" width="1.00" height="1.1"/>
<rect x="92.20" y="208.70" width="1.00" height="1.1"/>
<rect x="93.60" y="208.70" width="0.80" height="1.1"/>
<rect x="94.80" y="208.70" width="1.00" height="1.1"/>
<rect x="96.20" y="208.70" width="2.60" height="1.1"/>
<rect x="99.20" y="208.70" width="2.60" height="1.1"/>
<rect x="102.20" y="208.70" width="0.80" height="1.1"/>
<rect x="104.00" y="208.70" width="3.00" height="1.1"/>
<rect x="107.70" y="208.70" width="1.00" height="1.1"/>
<rect x="109.70" y="208.70" width="2.60" height="1.1"/>
<rect x="112.70" y="208.70" width="3.00" height="1.1"/>
<rect x="116.40" y="208.70" width="0.80" height="1.1"/>
<rect x="117.70" y="208.70" width="1.00" height="1.1"/>
<rect x="119.20" y="208.70" width="0.80" height="1.1"/>
<rect x="120.40" y="208.70" width="0.40" height="1.1"/>
<rect x="38.20" y="209.76" width="3.00" height="1.1"/>
<rect x="41.90" y="209.76" width="1.40" height="1.1"/>
<rect x="43.70" y="209.76" width="1.00" height="1.1"/>
<rect x="45.10" y="209.76" width="3.00" height="1.1"/>
<rect x="48.60" y="209.76" width="1.40" height="1.1"/>
<rect x="50.70" y="209.76" width="1.40" height="1.1"/>
<rect x="52.80" y="209.76" width="1.40" height="1.1"/>
<rect x="54.60" y="209.76" width="1.40" height="1.1"/>
<rect x="56.70" y="209.76" width="1.40" height="1.1"/>
<rect x="58.50" y="209.76" width="2.60" height="1.1"/>
<rect x="61.80" y="209.76" width="1.40" height="1.1"/>
<rect x="64.20" y="209.76" width="2.00" height="1.1"/>
<rect x="66.90" y="209.76" width="3.00" height="1.1"/>
<rect x="70.60" y="209.76" width="2.00" height="1.1"/>
<rect x="73.00" y="209.76" width="3.00" height="1.1"/>
<rect x="76.70" y="209.76" width="0.80" height="1.1"/>
<rect x="78.20" y="209.76" width="2.00" height="1.1"/>
<rect x="80.60" y="209.76" width="1.40" height="1.1"/>
<rect x="82.70" y="209.76" width="2.60" height="1.1"/>
<rect x="85.70" y="209.76" width="2.00" height="1.1"/>
<rect x="88.70" y="209.76" width="1.00" height="1.1"/>
<rect x="90.10" y="209.76" width="2.00" height="1.1"/>
<rect x="92.80" y="209.76" width="1.00" height="1.1"/>
<rect x="94.50" y="209.76" width="0.80" height="1.1"/>
<rect x="96.30" y="209.76" width="1.00" height="1.1"/>
<rect x="98.00" y="209.76" width="3.00" height="1.1"/>
<rect x="101.40" y="209.76" width="0.80" height="1.1"/>
<rect x="102.90" y="209.76" width="1.40" height="1.1"/>
<rect x="104.70" y="209.76" width="1.40" height="1.1"/>
<rect x="106.60" y="209.76" width="1.40" height="1.1"/>
<rect x="109.00" y="209.76" width="1.40" height="1.1"/>
<rect x="111.40" y="209.76" width="1.40" height="1.1"/>
<rect x="113.80" y="209.76" width="1.00" height="1.1"/>
<rect x="115.50" y="209.76" width="3.00" height="1.1"/>
<rect x="119.00" y="209.76" width="1.80" height="1.1"/>
<rect x="38.20" y="210.82" width="1.40" height="1.1"/>
<rect x="40.10" y="210.82" width="0.80" height="1.1"/>
<rect x="41.30" y="210.82" width="1.40" height="1.1"/>
<rect x="43.70" y="210.82" width="3.00" height="1.1"/>
<rect x="47.10" y="210.82" width="2.60" height="1.1"/>
<rect x="50.40" y="210.82" width="1.40" height="1.1"/>
<rect x="52.20" y="210.82" width="1.40" height="1.1"/>
<rect x="54.30" y="210.82" width="2.60" height="1.1"/>
<rect x="57.30" y="210.82" width="1.40" height="1.1"/>
<rect x="59.10" y="210.82" width="1.40" height="1.1"/>
<rect x="61.00" y="210.82" width="1.40" height="1.1"/>
<rect x="63.10" y="210.82" width="1.40" height="1.1"/>
<rect x="65.50" y="210.82" width="2.00" height="1.1"/>
<rect x="68.00" y="210.82" width="1.40" height="1.1"/>
<rect x="69.90" y="210.82" width="1.40" height="1.1"/>
<rect x="71.80" y="210.82" width="2.00" height="1.1"/>
<rect x="74.80" y="210.82" width="3.00" height="1.1"/>
<rect x="78.80" y="210.82" width="2.60" height="1.1"/>
<rect x="81.80" y="210.82" width="1.40" height="1.1"/>
<rect x="84.20" y="210.82" width="1.40" height="1.1"/>
<rect x="86.60" y="210.82" width="1.00" height="1.1"/>
<rect x="88.30" y="210.82" width="2.60" height="1.1"/>
<rect x="91.90" y="210.82" width="2.60" height="1.1"/>
<rect x="95.20" y="210.82" width="1.00" height="1.1"/>
<rect x="96.90" y="210.82" width="1.40" height="1.1"/>
<rect x="99.00" y="210.82" width="2.00" height="1.1"/>
<rect x="101.50" y="210.82" width="1.00" height="1.1"/>
<rect x="103.20" y="210.82" width="1.40" height="1.1"/>
<rect x="105.10" y="210.82" width="2.00" height="1.1"/>
<rect x="107.60" y="210.82" width="1.40" height="1.1"/>
<rect x="109.70" y="210.82" width="3.00" height="1.1"/>
<rect x="113.70" y="210.82" width="1.00" height="1.1"/>
<rect x="115.20" y="210.82" width="1.00" height="1.1"/>
<rect x="116.90" y="210.82" width="2.00" height="1.1"/>
<rect x="119.90" y="210.82" width="0.90" height="1.1"/>
<rect x="38.20" y="211.88" width="1.00" height="1.1"/>
<rect x="39.90" y="211.88" width="1.00" height="1.1"/>
<rect x="41.60" y="211.88" width="2.60" height="1.1"/>
<rect x="44.60" y="211.88" width="1.00" height="1.1"/>
<rect x="46.00" y="211.88" width="1.00" height="1.1"/>
<rect x="47.70" y="211.88" width="1.00" height="1.1"/>
<rect x="49.20" y="211.88" width="3.00" height="1.1"/>
<rect x="52.90" y="211.88" width="2.60" height="1.1"/>
<rect x="56.20" y="211.88" width="1.40" height="1.1"/>
<rect x="58.30" y="211.88" width="1.00" height="1.1"/>
<rect x="59.70" y="211.88" width="2.60" height="1.1"/>
<rect x="62.70" y="211.88" width="1.40" height="1.1"/>
<rect x="64.60" y="211.88" width="1.40" height="1.1"/>
<rect x="66.70" y="211.88" width="0.80" height="1.1"/>
<rect x="67.90" y="211.88" width="1.40" height="1.1"/>
<rect x="70.00" y="211.88" width="2.60" height="1.1"/>
<rect x="73.10" y="211.88" width="2.00" height="1.1"/>
<rect x="75.80" y="211.88" width="1.40" height="1.1"/>
<rect x="77.60" y="211.88" width="1.00" height="1.1"/>
<rect x="79.30" y="211.88" width="2.00" height="1.1"/>
<rect x="82.00" y="211.88" width="0.80" height="1.1"/>
<rect x="83.30" y="211.88" width="3.00" height="1.1"/>
<rect x="87.00" y="211.88" width="2.60" height="1.1"/>
<rect x="90.60" y="211.88" width="2.00" height="1.1"/>
<rect x="93.30" y="211.88" width="3.00" height="1.1"/>
<rect x="96.80" y="211.88" width="2.60" height="1.1"/>
<rect x="100.40" y="211.88" width="3.00" height="1.1"/>
<rect x="103.90" y="211.88" width="2.60" height="1.1"/>
<rect x="107.00" y="211.88" width="2.60" height="1.1"/>
<rect x="110.00" y="211.88" width="1.40" height="1.1"/>
<rect x="112.10" y="211.88" width="1.40" height="1.1"/>
<rect x="114.20" y="211.88" width="2.60" height="1.1"/>
<rect x="117.20" y="211.88" width="1.40" height="1.1"/>
<rect x="119.10" y="211.88" width="1.70" height="1.1"/>
<rect x="38.20" y="212.94" width="2.60" height="1.1"/>
<rect x="41.30" y="212.94" width="1.40" height="1.1"/>
<rect x="43.40" y="212.94" width="1.40" height="1.1"/>
<rect x="45.50" y="212.94" width="0.80" height="1.1"/>
<rect x="47.30" y="212.94" width="3.00" height="1.1"/>
<rect x="51.00" y="212.94" width="2.00" height="1.1"/>
<rect x="53.50" y="212.94" width="2.60" height="1.1"/>
<rect x="56.80" y="212.94" width="3.00" height="1.1"/>
<rect x="60.20" y="212.94" width="1.40" height="1.1"/>
<rect x="62.30" y="212.94" width="0.80" height="1.1"/>
<rect x="63.50" y="212.94" width="1.40" height="1.1"/>
<rect x="65.90" y="212.94" width="1.00" height="1.1"/>
<rect x="67.40" y="212.94" width="2.60" height="1.1"/>
<rect x="70.50" y="212.94" width="2.00" height="1.1"/>
<rect x="73.20" y="212.94" width="0.80" height="1.1"/>
<rect x="75.00" y="212.94" width="1.40" height="1.1"/>
<rect x="77.40" y="212.94" width="1.00" height="1.1"/>
<rect x="79.10" y="212.94" width="2.00" height="1.1"/>
<rect x="81.50" y="212.94" width="2.60" height="1.1"/>
<rect x="84.80" y="212.94" width="2.00" height="1.1"/>
<rect x="87.50" y="212.94" width="1.40" height="1.1"/>
<rect x="89.60" y="212.94" width="1.00" height="1.1"/>
<rect x="91.10" y="212.94" width="1.40" height="1.1"/>
<rect x="93.50" y="212.94" width="3.00" height="1.1"/>
<rect x="96.90" y="212.94" width="2.60" height="1.1"/>
<rect x="100.50" y="212.94" width="1.40" height="1.1"/>
<rect x="102.30" y="212.94" width="1.40" height="1.1"/>
<rect x="104.40" y="212.94" width="1.40" height="1.1"/>
<rect x="106.50" y="212.94" width="0.80" height="1.1"/>
<rect x="107.70" y="212.94" width="0.80" height="1.1"/>
<rect x="109.20" y="212.94" width="1.40" height="1.1"/>
<rect x="111.30" y="212.94" width="2.00" height="1.1"/>
<rect x="114.00" y="212.94" width="0.80" height="1.1"/>
<rect x="115.30" y="212.94" width="1.40" height="1.1"/>
<rect x="117.40" y="212.94" width="2.00" height="1.1"/>
<rect x="119.90" y="212.94" width="0.90" height="1.1"/>
</g>
</g>
<g clip-path="url(#cpf)">
<rect x="185" y="127" width="170" height="106" fill="url(#fr)"/>
<g filter="url(#b2)">
<ellipse cx="341" cy="176" rx="10" ry="34" fill="#c3cfb2" opacity="0.8"/>
<ellipse cx="327" cy="170" rx="13" ry="23" fill="#d4c2a6" opacity="0.85"/>
<ellipse cx="324" cy="154" rx="8" ry="6" fill="#c3ab8c" opacity="0.75"/>
<ellipse cx="336" cy="188" rx="9" ry="8" fill="#b5b994" opacity="0.7"/>
<ellipse cx="314" cy="182" rx="8" ry="7" fill="#dccab2" opacity="0.7"/>
<ellipse cx="345" cy="149" rx="6" ry="8" fill="#dccdbb" opacity="0.8"/>
<path d="M282 147 L296 146 L304 158 L296 162 L286 156z" fill="#afc2d8" opacity="0.8"/>
<ellipse cx="270" cy="206" rx="24" ry="9" fill="#cfd6ea" opacity="0.85"/>
<ellipse cx="330" cy="216" rx="24" ry="11" fill="#ead6de" opacity="0.8"/>
<ellipse cx="222" cy="222" rx="34" ry="7" fill="#f0d9d4" opacity="0.8"/>
<ellipse cx="262" cy="160" rx="18" ry="10" fill="#f3d3cd" opacity="0.5"/>
<ellipse cx="300" cy="200" rx="12" ry="8" fill="#d3e2d6" opacity="0.6"/>
</g>
<g filter="url(#b1)" opacity="0.42"><path d="M320 150 l6 -4 l8 4 l-3 8 l-9 1z" fill="#8d775c"/><path d="M322 164 l11 -3 l7 9 l-9 9 l-10 -5z" fill="#9d8866"/><path d="M330 182 l9 2 l2 8 l-9 3 l-6 -6z" fill="#7c8862"/><circle cx="336" cy="157" r="2.4" fill="#c86a60"/><circle cx="320" cy="172" r="2" fill="#b67664"/><path d="M312 176 l8 -3 l3 6 l-8 4z" fill="#ffffff"/><path d="M326 158 l5 0 l1 5 l-6 1z" fill="#ffffff"/></g>
<text x="192.4" y="143.3" font-family="Liberation Sans" font-weight="bold" font-size="13.6" fill="#273878" textLength="55.6" lengthAdjust="spacingAndGlyphs" filter="url(#b03)">California</text>
<text x="249.4" y="138.6" font-family="Liberation Sans" font-size="3.4" fill="#56608a">USA</text>
<text x="264" y="139" font-family="Liberation Sans" font-weight="bold" font-size="6.4" fill="#3c63ad" textLength="45.4" lengthAdjust="spacingAndGlyphs" filter="url(#b03)">DRIVER LICENSE</text>
<rect x="248.6" y="143.2" width="68.6" height="0.9" fill="#5da06a" opacity="0.85"/><rect x="248.6" y="145" width="68.6" height="0.7" fill="#8fb6c8" opacity="0.8"/>
<g font-family="Liberation Sans" font-size="4.4" fill="#3a3a3a" filter="url(#b03)"><text x="319" y="139.6" textLength="21.4" lengthAdjust="spacingAndGlyphs">FEDERAL</text><text x="319" y="143.6" textLength="16" lengthAdjust="spacingAndGlyphs">LIMITS</text><text x="319" y="147.6" textLength="15" lengthAdjust="spacingAndGlyphs">APPLY</text></g>
<g clip-path="url(#cpp)">
<rect x="192" y="146" width="50" height="66" fill="#45a1c4"/>
<g filter="url(#b1)">
<path d="M190 214 L190 201 Q199 197 207 195.6 L214 204 L224 204 L230 194.6 Q238 195 243 197 L243 214z" fill="#77775f"/>
<path d="M206 196 L213 206 L210 212 L203 200z M231 195 L224.6 206 L228 212 L235 198z" fill="#8d8c74"/>
<path d="M210.6 196 L227.4 196 L226.4 205 Q218.6 211 211.4 205z" fill="#b98562"/>
<path d="M199.6 179 Q197 174 197.4 168 Q197 156 203.4 150.4 Q211 145.6 223 146 Q233.6 147.6 237.6 156 Q240 166 238 177 L233.8 177.6 L233 166 L204 166 L203.6 179z" fill="#1a1512"/>
<path d="M202.6 172 Q202.4 164 206 160.6 L231 160.6 Q233.8 165 233.4 173 Q233.6 186 229 194.6 Q224 202.6 218.4 203 Q212.4 202.6 207.4 195.4 Q203 187 202.6 172z" fill="#d9aa86"/>
<ellipse cx="217.6" cy="176" rx="9.6" ry="12" fill="#e6bd9c" opacity="0.8"/>
<path d="M205 188 Q209 199 218.4 201 Q227.6 199 231.4 187.6 Q229.6 196.4 225 200.6 Q218.4 205 211.6 200.6 Q206.6 196.4 205 188z" fill="#7d5a44" opacity="0.6"/>
<path d="M202 168 Q203 160 208 157.6 Q216 155.6 224 158 Q229.4 160 231.6 164.6 Q233.6 168.4 233.6 172 Q230.6 165.6 226.6 163.6 Q220 160.6 212 162.4 Q205.6 164 203.4 170z" fill="#1a1512"/>
</g>
<g filter="url(#b07)">
<path d="M208 171.2 q3.2 -1.2 6.4 -0.2 M221.8 171 q3.2 -1 6.4 0.2" stroke="#2a1c15" stroke-width="1.1" fill="none" opacity="0.85"/>
<path d="M209.4 174.6 q2.2 -0.8 4.4 0 M222.8 174.6 q2.2 -0.8 4.4 0" stroke="#2c1e18" stroke-width="1.3" fill="none" opacity="0.85"/>
<path d="M216.4 178 q-1.4 4 -0.6 5.6 q2.6 1 5.2 0" stroke="#a8775a" stroke-width="0.9" fill="none" opacity="0.8"/>
<path d="M212.4 188.8 Q218.2 189.8 224 188.8 Q221.8 192.6 218.2 192.8 Q214.4 192.6 212.4 188.8z" fill="#f1e9e3" stroke="#9a5a4e" stroke-width="0.7"/>
<path d="M206 176 q-1 8 2 14 M231 176 q1 8 -2.4 14" stroke="#b98562" stroke-width="2" fill="none" opacity="0.6"/>
</g>
<rect x="238.4" y="168" width="1.5" height="17" fill="#e9f2f6" opacity="0.7"/>
</g>
<g font-family="Liberation Sans" font-weight="bold" filter="url(#b03)">
<text x="243.2" y="157.2" font-size="4" fill="#3c5c9c">DL</text><text x="249.3" y="157.2" font-size="8.2" fill="#bf3640" textLength="31.2" lengthAdjust="spacingAndGlyphs">I1234562</text>
<text x="243.2" y="166.5" font-size="4" fill="#3c5c9c">EXP</text><text x="252.3" y="166.5" font-size="7.5" fill="#bf3640" textLength="31.8" lengthAdjust="spacingAndGlyphs">08/31/2014</text>
<text x="299.3" y="154.4" font-size="4.8" fill="#3d5fa3" textLength="18" lengthAdjust="spacingAndGlyphs">CLASS C</text>
<text x="299.3" y="165.8" font-size="4.8" fill="#3d5fa3" textLength="9.2" lengthAdjust="spacingAndGlyphs">END</text><text x="309.6" y="165.8" font-size="4.8" fill="#33353a" textLength="11.4" lengthAdjust="spacingAndGlyphs">NONE</text>
<text x="243.2" y="172.8" font-size="3.6" fill="#3c5c9c">LN</text><text x="248.6" y="172.8" font-size="6" fill="#26262a" textLength="22.8" lengthAdjust="spacingAndGlyphs">SAMPLE</text>
<text x="243.2" y="178.9" font-size="3.6" fill="#3c5c9c">FN</text><text x="248.6" y="178.9" font-size="6.2" fill="#26262a" textLength="57.6" lengthAdjust="spacingAndGlyphs">ALEXANDER JOSEPH</text>
<text x="243.2" y="182.9" font-size="4" fill="#33353a" textLength="36.6" lengthAdjust="spacingAndGlyphs">2570 24TH STREET</text>
<text x="243.2" y="187.6" font-size="4" fill="#33353a" textLength="41.6" lengthAdjust="spacingAndGlyphs">ANYTOWN, CA 95818</text>
<text x="243.2" y="195.4" font-size="4" fill="#3c5c9c">DOB</text><text x="253" y="195.4" font-size="7.6" fill="#bf3640" textLength="30.4" lengthAdjust="spacingAndGlyphs">08/31/1977</text>
<text x="243.2" y="200" font-size="4" fill="#3c5c9c" textLength="9.6" lengthAdjust="spacingAndGlyphs">RSTR</text><text x="254" y="200" font-size="4.4" fill="#33353a" textLength="12.4" lengthAdjust="spacingAndGlyphs">NONE</text>
<text x="318.9" y="200.4" font-size="5.6" font-weight="normal" fill="#8b8f96" textLength="24" lengthAdjust="spacingAndGlyphs">08311977</text>
<text x="260.3" y="215.2" font-size="3.8" fill="#3d5fa3" textLength="7.4" lengthAdjust="spacingAndGlyphs">SEX</text><text x="269.3" y="215.2" font-size="3.8" fill="#2c2d33" textLength="4" lengthAdjust="spacingAndGlyphs">M</text>
<text x="286" y="215.2" font-size="3.8" fill="#3d5fa3" textLength="9.6" lengthAdjust="spacingAndGlyphs">HAIR</text><text x="297.20000000000005" y="215.2" font-size="3.8" fill="#2c2d33" textLength="9.6" lengthAdjust="spacingAndGlyphs">BLK</text>
<text x="315.9" y="215.2" font-size="3.8" fill="#3d5fa3" textLength="10" lengthAdjust="spacingAndGlyphs">EYES</text><text x="327.5" y="215.2" font-size="3.8" fill="#2c2d33" textLength="9" lengthAdjust="spacingAndGlyphs">BRN</text>
<text x="260.3" y="219.9" font-size="3.8" fill="#3d5fa3" textLength="7.6" lengthAdjust="spacingAndGlyphs">HGT</text><text x="269.50000000000006" y="219.9" font-size="3.8" fill="#2c2d33" textLength="10.8" lengthAdjust="spacingAndGlyphs">5'-08"</text>
<text x="286" y="219.9" font-size="3.8" fill="#3d5fa3" textLength="9" lengthAdjust="spacingAndGlyphs">WGT</text><text x="296.6" y="219.9" font-size="3.8" fill="#2c2d33" textLength="10.6" lengthAdjust="spacingAndGlyphs">150 lb</text>
<text x="324.5" y="219.9" font-size="3.8" fill="#3d5fa3" textLength="7.4" lengthAdjust="spacingAndGlyphs">ISS</text>
<text x="260.3" y="226" font-size="3.8" fill="#3d5fa3" textLength="5.4" lengthAdjust="spacingAndGlyphs">DD</text><text x="267.2" y="226" font-size="3.6" fill="#2c2d33" textLength="45" lengthAdjust="spacingAndGlyphs">00/00/0000NNNAN/ANFD/YY</text>
<text x="324.5" y="226" font-size="4.2" fill="#2c2d33" textLength="20.8" lengthAdjust="spacingAndGlyphs">08/31/2009</text>
</g>
<g clip-path="url(#cpg)" filter="url(#b05)" opacity="0.95">
<rect x="288" y="185.6" width="19.8" height="27" fill="#d2d3d4"/>
<path d="M287 214 L287 208.6 Q291 206.4 294 205.8 L297 209 L300.6 209 L303 205.6 Q306 206 309 207.4 L309 214z" fill="#4e504a"/>
<path d="M295 203 h6.4 v5 q-3.2 2 -6.4 0z" fill="#9c958e"/>
<path d="M290.6 197 Q290 190.6 293.6 188.4 Q297.6 186.6 301.6 187.6 Q305.6 189.4 306 196 Q305.6 199 305 200 L291.6 200.4z" fill="#2e2a28"/>
<path d="M292.6 197.6 Q292.6 194 294 192.6 L303.6 192.6 Q304.8 194.4 304.6 198 Q304.6 203 302.6 206 Q300.4 208.6 298.4 208.6 Q296 208.4 294.2 205.6 Q292.6 202.6 292.6 197.6z" fill="#bdb6b0"/>
<path d="M292.4 196.4 Q293 192.4 296 191.6 Q300 191 303 192.6 Q304.6 194 304.8 197 Q303.4 194.6 301.6 194 Q298 193.2 295 194.2 Q293.4 195 292.8 197.4z" fill="#2e2a28"/>
<path d="M294.6 197.8 h2.8 M299.8 197.8 h2.8" stroke="#3f3a36" stroke-width="0.9"/>
<path d="M296.6 203.4 q1.9 0.9 3.8 0" stroke="#efeae6" stroke-width="0.9" fill="none"/>
</g>
<circle cx="247.4" cy="205.7" r="3.5" fill="#d77f8d" opacity="0.9" filter="url(#b05)"/><rect x="244.6" y="204.8" width="5.6" height="1.6" fill="#f0c9cf" opacity="0.9"/>
<g stroke="#9fb4d6" stroke-width="0.6" fill="none" opacity="0.8"><path d="M252 212 V200 M256 212 V202 M262 212 V196 M266 212 V196 M272 212 V202 M276 212 V204 M250 212 H280 M259 196 Q264 188 269 196"/></g>
<path d="M191.6 217.6 q1.6 -4.4 4 -3.6 q1.6 1 -1.2 4 q-1.4 1.4 0.8 0.6 l2.4 -1.8 q0.6 1.6 2 0 q1 -1.8 2.2 -0.2 q0.8 1.4 2.4 -0.4 q0.6 1.4 2.2 0 l2 -1.4 l-1.6 3 m6 -6.4 q2.2 -0.6 1 3.4 q-1 3.6 -3 4 q-1.6 0 0.6 -2.4 m5.2 -4.4 q2.6 -2.6 3.6 -0.6 q0.4 1.8 -3 2.8 q3.2 0.2 2 2.2 q-1.4 1.6 -3.8 0.4 m7.4 -2.4 q1.4 -1.4 2.4 0 q-1.4 2.8 -2.4 1.4 m2.8 -1.6 l-0.4 2 q1.6 -2.6 2.6 -1 l0.4 1.4 q1.2 -1.8 2 -0.6 l0.4 1 m1.4 -1 l-0.6 4.4 m0.8 -4.6 q2 -0.8 1.4 1 q-0.8 1.2 -2 0.6 m4 -4.6 l-1 5 q1.4 -0.2 2.4 -1 q2.2 -2 0.4 -2.2 q-1.6 0.8 -0.4 2.6 q1.4 0.8 3.4 -1" stroke="#1c1a1a" stroke-width="0.85" fill="none" stroke-linecap="round" stroke-linejoin="round" filter="url(#b03)"/>
</g>
<rect x="24" y="127.4" width="326" height="0.9" fill="#1a1a1a"/><rect x="24" y="230.6" width="326" height="1" fill="#1a1a1a"/>
</svg>
</div>
</body>
</html>
